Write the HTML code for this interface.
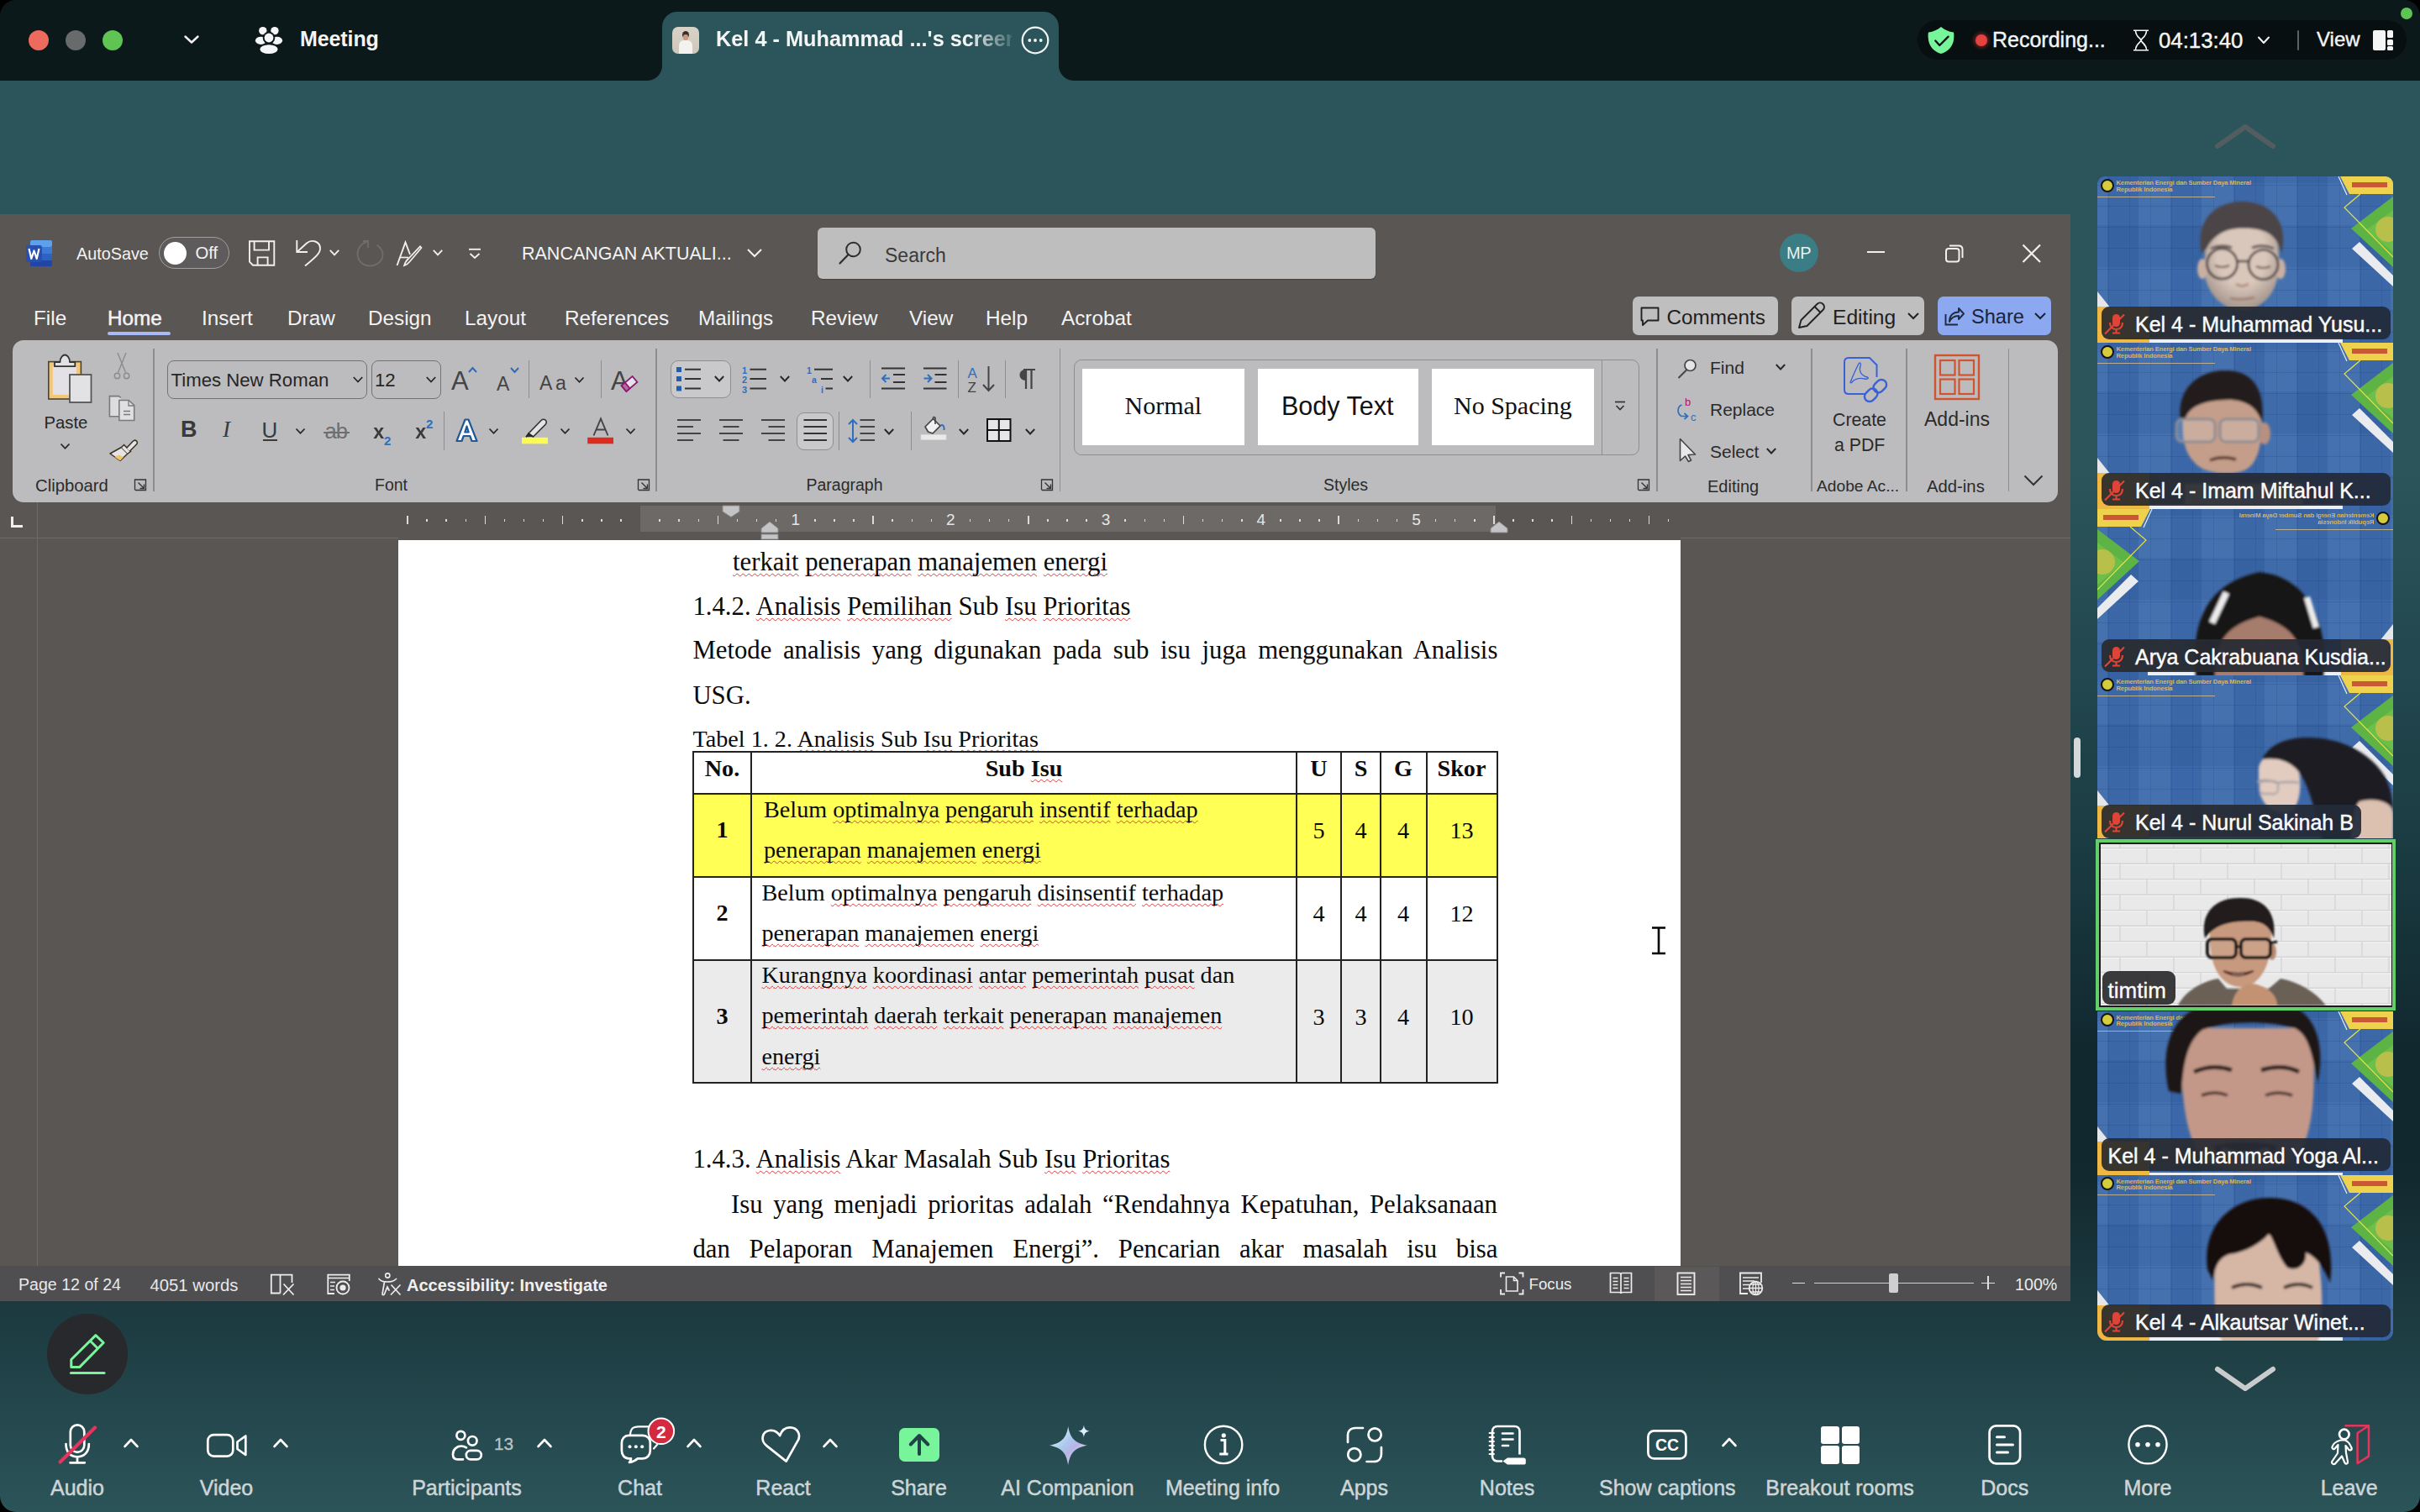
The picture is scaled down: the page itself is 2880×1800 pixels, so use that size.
<!DOCTYPE html>
<html><head><meta charset="utf-8">
<style>
*{margin:0;padding:0;box-sizing:border-box}
html,body{width:2880px;height:1800px;overflow:hidden;background:#000;font-family:"Liberation Sans",sans-serif}
.a{position:absolute}
.t{line-height:1;white-space:nowrap}
.sr{font-family:"Liberation Serif",serif}
#app{position:absolute;left:0;top:0;width:2880px;height:1800px;border-radius:19px;overflow:hidden;
background:linear-gradient(180deg,#0c191a 0px,#0c191a 90px,#2b555b 90px,#2b555b 560px,#1b3c43 1000px,#11272e 1260px,#12292f 1400px,#2b5459 1800px)}
#topbar{left:0;top:0;width:2880px;height:96px;background:#0c191a;border-radius:19px 19px 0 0}
#tab{left:788px;top:14px;width:472px;height:82px;background:#2b555b;border-radius:18px 18px 0 0}
#tab:before,#tab:after{content:"";position:absolute;bottom:0;width:18px;height:18px}
#tab:before{left:-18px;background:radial-gradient(circle at 0 0,#0c191a 17.5px,#2b555b 18.5px)}
#tab:after{right:-18px;background:radial-gradient(circle at 100% 0,#0c191a 17.5px,#2b555b 18.5px)}
#word{left:0;top:255px;width:2464px;height:1294px;background:#5a5653}
#ribbon{left:15px;top:405px;width:2434px;height:193px;background:#bcbcbe;border-radius:13px}
#page{left:474px;top:643px;width:1526px;height:864px;background:#fff;overflow:hidden}
#status{left:0;top:1507px;width:2464px;height:42px;background:#4f4f51}
.wt{color:#f3f3f3}
.rl{color:#2b2b2b}
</style></head><body>
<div id="app">
  <div id="topbar" class="a"></div>
  <div id="tab" class="a"></div>
  <!-- traffic lights -->
  <div class="a" style="left:34px;top:36px;width:24px;height:24px;border-radius:50%;background:#ec6a5e"></div>
  <div class="a" style="left:78px;top:36px;width:24px;height:24px;border-radius:50%;background:#676b6c"></div>
  <div class="a" style="left:122px;top:36px;width:24px;height:24px;border-radius:50%;background:#5fc454"></div>
  <svg class="a" style="left:218px;top:40px" width="20" height="14" viewBox="0 0 20 14"><path d="M2.5 3.5 L10 10.5 L17.5 3.5" fill="none" stroke="#f2f2f2" stroke-width="2.4" stroke-linecap="round" stroke-linejoin="round"/></svg>
  <svg class="a" style="left:300px;top:30px" width="40" height="36" viewBox="300 30 40 36">
    <circle cx="312.8" cy="36.6" r="4.7" fill="#f5f6f7"/><circle cx="326.9" cy="36.6" r="4.7" fill="#f5f6f7"/>
    <ellipse cx="310.5" cy="48.3" rx="6.6" ry="4.6" fill="#f5f6f7"/><ellipse cx="329.5" cy="48.3" rx="6.6" ry="4.6" fill="#f5f6f7"/>
    <circle cx="320" cy="45" r="7.3" fill="#0c191a"/><circle cx="320" cy="45" r="5.4" fill="#f5f6f7"/>
    <ellipse cx="320" cy="58.8" rx="12.3" ry="6.8" fill="#0c191a"/><ellipse cx="320" cy="58.6" rx="10.6" ry="5.4" fill="#f5f6f7"/>
  </svg>
  <div class="a t" style="left:357px;top:34px;font-size:25px;font-weight:bold;color:#f4f5f5;letter-spacing:-0.1px">Meeting</div>
  <!-- tab content -->
  <div class="a" style="left:800px;top:32px;width:32px;height:32px;border-radius:7px;background:linear-gradient(180deg,#d8d2c8,#cfc7bb);overflow:hidden">
    <div class="a" style="left:12px;top:5px;width:8px;height:9px;border-radius:50%;background:#3a2e28"></div>
    <div class="a" style="left:13px;top:9px;width:6px;height:7px;border-radius:45%;background:#c89a80"></div>
    <div class="a" style="left:8px;top:16px;width:16px;height:16px;border-radius:6px 6px 0 0;background:#f4f2ee"></div>
  </div>
  <div class="a t" style="left:852px;top:34px;font-size:25.3px;font-weight:bold;color:#f4f5f5;white-space:nowrap;width:352px;overflow:hidden;-webkit-mask-image:linear-gradient(90deg,#000 300px,rgba(0,0,0,0.15) 352px)">Kel 4 - Muhammad ...'s screen</div>
  <svg class="a" style="left:1214px;top:30px" width="36" height="36" viewBox="0 0 36 36"><circle cx="18" cy="18" r="15.3" fill="none" stroke="#f4f5f5" stroke-width="2.2"/><circle cx="11.3" cy="18" r="1.9" fill="#f4f5f5"/><circle cx="18" cy="18" r="1.9" fill="#f4f5f5"/><circle cx="24.7" cy="18" r="1.9" fill="#f4f5f5"/></svg>
  <!-- right pill -->
  <div class="a" style="left:2282px;top:24px;width:582px;height:47px;border-radius:24px;background:#070f10"></div>
  <svg class="a" style="left:2294px;top:31px" width="33" height="35" viewBox="2294 31 33 35">
    <path d="M2310 32 C2314.5 35.6 2319 37.6 2325 38.6 C2325.6 40 2325.4 44 2325.2 46 C2324.4 55.5 2318 61.5 2310 64 C2302 61.5 2295.6 55.5 2294.8 46 C2294.6 44 2294.4 40 2295 38.6 C2301 37.6 2305.5 35.6 2310 32 Z" fill="#76f59b"/>
    <path d="M2303.3 48.5 L2308.3 54 L2318.6 43.6" fill="none" stroke="#0b1414" stroke-width="2.3" stroke-linecap="round" stroke-linejoin="round"/>
  </svg>
  <div class="a" style="left:2351px;top:41px;width:14px;height:14px;border-radius:50%;background:#e6423f;box-shadow:0 0 4px 2px rgba(230,60,60,0.45)"></div>
  <div class="a t" style="left:2371px;top:35px;font-size:25px;color:#f4f5f5;-webkit-text-stroke:0.4px #f4f5f5">Recording...</div>
  <svg class="a" style="left:2537px;top:34px" width="22" height="28" viewBox="2537 34 22 28">
    <path d="M2539 36.2 H2557 M2539 59.8 H2557 M2541.5 36.2 C2541.5 44 2547.5 45 2548 48 C2547.5 51 2541.5 52 2541.5 59.8 M2554.5 36.2 C2554.5 44 2548.5 45 2548 48 C2548.5 51 2554.5 52 2554.5 59.8" fill="none" stroke="#f4f5f5" stroke-width="1.6"/>
    <path d="M2549 50.5 C2551 51.5 2552 53 2552.3 54.5" fill="none" stroke="#f4f5f5" stroke-width="1.3"/>
  </svg>
  <div class="a t" style="left:2569px;top:36px;font-size:25.8px;color:#f4f5f5;-webkit-text-stroke:0.4px #f4f5f5">04:13:40</div>
  <svg class="a" style="left:2686px;top:42px" width="16" height="12" viewBox="0 0 16 12"><path d="M2 2.5 L8 9 L14 2.5" fill="none" stroke="#f4f5f5" stroke-width="2" stroke-linecap="round" stroke-linejoin="round"/></svg>
  <div class="a" style="left:2734px;top:36px;width:2px;height:24px;background:#5b6262;border-radius:1px"></div>
  <div class="a t" style="left:2757px;top:34.5px;font-size:24px;color:#f4f5f5;-webkit-text-stroke:0.4px #f4f5f5">View</div>
  <div class="a" style="left:2824px;top:36px;width:15px;height:24px;border-radius:2px;background:#f4f5f5"></div>
  <div class="a" style="left:2841px;top:36px;width:7px;height:9px;border-radius:1.5px;background:#f4f5f5"></div>
  <div class="a" style="left:2841px;top:46.5px;width:7px;height:7px;border-radius:1.5px;background:#f4f5f5"></div>
  <div class="a" style="left:2841px;top:55px;width:7px;height:5px;border-radius:1.5px;background:#f4f5f5"></div>
  <div class="a" style="left:2857px;top:9px;width:14px;height:14px;border-radius:50%;background:#5ec454"></div>
  <div id="word" class="a"></div>
  <!-- word icon -->
  <svg class="a" style="left:30px;top:285px" width="34" height="33" viewBox="0 0 34 33">
    <rect x="6" y="1" width="26" height="31" rx="2" fill="#2b5fc2"/>
    <rect x="6" y="1" width="26" height="8" rx="2" fill="#5ea0ea"/>
    <rect x="6" y="9" width="26" height="8" fill="#3d7ad8"/>
    <rect x="6" y="17" width="26" height="8" fill="#2e62c0"/>
    <rect x="6" y="25" width="26" height="7" rx="1" fill="#1f45a6"/>
    <rect x="1" y="7" width="19" height="20" rx="2.5" fill="#2850b0"/>
    <path d="M4.5 11 L7.3 23 L10.5 13.5 L13.7 23 L16.5 11" fill="none" stroke="#fff" stroke-width="2.2" stroke-linejoin="round"/>
  </svg>
  <div class="a t wt" style="left:91px;top:292.5px;font-size:19.8px">AutoSave</div>
  <div class="a" style="left:189px;top:282px;width:84px;height:38px;border-radius:19px;border:1.6px solid #a39f9d;background:#5e5b5c"></div>
  <div class="a" style="left:195px;top:287.5px;width:27px;height:27px;border-radius:50%;background:#fff"></div>
  <div class="a t wt" style="left:232.5px;top:290.5px;font-size:20.3px">Off</div>
  <!-- save -->
  <svg class="a" style="left:294px;top:284px" width="36" height="36" viewBox="294 284 36 36">
    <path d="M297 287.3 H326.3 V315.7 H301 L297 311.7 Z" fill="none" stroke="#f0f0f0" stroke-width="1.9"/>
    <path d="M302.6 287.3 V297.6 H320 V287.3" fill="none" stroke="#f0f0f0" stroke-width="1.9"/>
    <path d="M306.6 315.7 V306.4 H318.6 V315.7" fill="none" stroke="#f0f0f0" stroke-width="1.9"/>
  </svg>
  <!-- undo -->
  <svg class="a" style="left:350px;top:283px" width="36" height="36" viewBox="350 283 36 36">
    <path d="M353.3 286 V300 H366" fill="none" stroke="#f0f0f0" stroke-width="1.9"/>
    <path d="M354 299.5 L365 289.5 C371 284.5 381 287 381 296 C381 301 377 305 363 316.5" fill="none" stroke="#f0f0f0" stroke-width="1.9"/>
  </svg>
  <svg class="a" style="left:391px;top:296px" width="14" height="10" viewBox="0 0 14 10"><path d="M1.8 1.8 L7 7.3 L12.2 1.8" fill="none" stroke="#f0f0f0" stroke-width="1.9"/></svg>
  <!-- redo gray -->
  <svg class="a" style="left:422px;top:284px" width="36" height="36" viewBox="422 284 36 36">
    <path d="M448.5 291.5 C453 295 455.5 299 455.5 303 C455.5 310.5 449 316.5 440.5 316.5 C432 316.5 425.5 310.5 425.5 302 C425.5 295.5 430.5 289.5 437 287.5" fill="none" stroke="#706c6a" stroke-width="1.9"/>
    <path d="M432 287 H438 V295" fill="none" stroke="#706c6a" stroke-width="1.9"/>
  </svg>
  <!-- editor -->
  <svg class="a" style="left:470px;top:286px" width="36" height="34" viewBox="470 286 36 34">
    <path d="M472.5 316 L482.5 288.5 L488 303" fill="none" stroke="#f0f0f0" stroke-width="1.9"/>
    <path d="M476 306.5 H486" fill="none" stroke="#f0f0f0" stroke-width="1.7"/>
    <path d="M501.5 295 L488 311 C486.5 313 485 315 481 316.2 C482 313 483.5 310 486 308 L500 293.3 Z" fill="none" stroke="#f0f0f0" stroke-width="1.7"/>
  </svg>
  <svg class="a" style="left:514px;top:296px" width="14" height="10" viewBox="0 0 14 10"><path d="M1.8 1.8 L7 7.3 L12.2 1.8" fill="none" stroke="#f0f0f0" stroke-width="1.9"/></svg>
  <svg class="a" style="left:556px;top:294px" width="18" height="16" viewBox="0 0 18 16"><path d="M2 2.8 H16" stroke="#f0f0f0" stroke-width="1.9"/><path d="M3.5 8 L9 13 L14.5 8" fill="none" stroke="#f0f0f0" stroke-width="1.9"/></svg>
  <div class="a t wt" style="left:621px;top:292.3px;font-size:21.5px">RANCANGAN AKTUALI...</div>
  <svg class="a" style="left:888px;top:294px" width="20" height="14" viewBox="0 0 20 14"><path d="M2 3 L10 11 L18 3" fill="none" stroke="#f0f0f0" stroke-width="2"/></svg>
  <!-- search -->
  <div class="a" style="left:973px;top:271px;width:664px;height:61px;border-radius:6px;background:#bfbebf;box-shadow:0 1px 1px rgba(0,0,0,0.25)"></div>
  <svg class="a" style="left:997px;top:286px" width="30" height="30" viewBox="0 0 30 30"><circle cx="18.5" cy="11" r="8.3" fill="none" stroke="#2e2e2e" stroke-width="2"/><path d="M12.6 17 L2.5 27.5" stroke="#2e2e2e" stroke-width="2.2" stroke-linecap="round"/></svg>
  <div class="a t" style="left:1053px;top:292.5px;font-size:23px;color:#3a3a3a">Search</div>
  <!-- MP -->
  <div class="a" style="left:2117.5px;top:278px;width:46px;height:46px;border-radius:50%;background:#3a7d85"></div>
  <div class="a t" style="left:2117.5px;top:291px;width:46px;text-align:center;font-size:20px;color:#e9f0f0;letter-spacing:-0.5px">MP</div>
  <div class="a" style="left:2222px;top:299px;width:21px;height:2px;background:#f0f0f0"></div>
  <svg class="a" style="left:2312px;top:289px" width="28" height="26" viewBox="2312 289 28 26">
    <rect x="2316" y="296" width="15.5" height="15.5" rx="3" fill="none" stroke="#f0f0f0" stroke-width="2"/>
    <path d="M2320 292.5 H2331 C2334 292.5 2335.5 294 2335.5 297 V307" fill="none" stroke="#f0f0f0" stroke-width="2"/>
  </svg>
  <svg class="a" style="left:2404px;top:288px" width="28" height="28" viewBox="0 0 28 28"><path d="M3.5 3.5 L24 24 M24 3.5 L3.5 24" stroke="#f0f0f0" stroke-width="2.2"/></svg>
  <!-- tabs -->
  <div class="a t wt" style="left:40px;top:366.8px;font-size:24.3px">File</div>
  <div class="a t wt" style="left:128px;top:366.8px;font-size:24.3px;-webkit-text-stroke:0.5px #f3f3f3">Home</div>
  <div class="a" style="left:128px;top:395px;width:75px;height:4px;border-radius:2px;background:#a9b9f5"></div>
  <div class="a t wt" style="left:240px;top:366.8px;font-size:24.3px">Insert</div>
  <div class="a t wt" style="left:342px;top:366.8px;font-size:24.3px">Draw</div>
  <div class="a t wt" style="left:438px;top:366.8px;font-size:24.3px">Design</div>
  <div class="a t wt" style="left:553px;top:366.8px;font-size:24.3px">Layout</div>
  <div class="a t wt" style="left:672px;top:366.8px;font-size:24.3px">References</div>
  <div class="a t wt" style="left:831px;top:366.8px;font-size:24.3px">Mailings</div>
  <div class="a t wt" style="left:965px;top:366.8px;font-size:24.3px">Review</div>
  <div class="a t wt" style="left:1082px;top:366.8px;font-size:24.3px">View</div>
  <div class="a t wt" style="left:1173px;top:366.8px;font-size:24.3px">Help</div>
  <div class="a t wt" style="left:1263px;top:366.8px;font-size:24.3px">Acrobat</div>
  <!-- buttons -->
  <div class="a" style="left:1943px;top:353px;width:173px;height:46px;border-radius:7px;background:#c0bfc0"></div>
  <svg class="a" style="left:1951px;top:364px" width="26" height="26" viewBox="1951 364 26 26">
    <path d="M1953.5 366.5 H1973.5 V381.5 H1961 L1955 387 V381.5 H1953.5 Z" fill="none" stroke="#222" stroke-width="1.9" stroke-linejoin="round"/>
  </svg>
  <div class="a t" style="left:1983.5px;top:365.5px;font-size:24.3px;color:#1e1e1e">Comments</div>
  <div class="a" style="left:2132px;top:353px;width:158px;height:46px;border-radius:7px;background:#c0bfc0"></div>
  <svg class="a" style="left:2138px;top:359px" width="36" height="34" viewBox="2138 359 36 34">
    <path d="M2141 390 L2143.5 381 L2162.5 362 C2164.5 360 2167.5 360 2169.5 362 C2171.5 364 2171.5 367 2169.5 369 L2150.5 388 Z" fill="none" stroke="#222" stroke-width="1.9" stroke-linejoin="round"/>
    <path d="M2159.5 365 L2166.5 372" stroke="#222" stroke-width="1.9"/>
  </svg>
  <div class="a t" style="left:2181px;top:365.5px;font-size:24.6px;color:#1e1e1e">Editing</div>
  <svg class="a" style="left:2269px;top:371px" width="16" height="11" viewBox="0 0 16 11"><path d="M2 2 L8 8 L14 2" fill="none" stroke="#222" stroke-width="2"/></svg>
  <div class="a" style="left:2306px;top:353px;width:135px;height:46px;border-radius:7px;background:#8ba8f0"></div>
  <svg class="a" style="left:2312px;top:363px" width="28" height="28" viewBox="2312 363 28 28">
    <path d="M2315.5 374 V386.5 H2330" fill="none" stroke="#1e2a40" stroke-width="1.9"/>
    <path d="M2320 383 C2320 375 2325 371.5 2331 371.5 V367 L2337 373.5 L2331 380 V376 C2326 376 2322 378.5 2320 383 Z" fill="none" stroke="#1e2a40" stroke-width="1.9" stroke-linejoin="round"/>
  </svg>
  <div class="a t" style="left:2346px;top:365.5px;font-size:23.6px;color:#1a2338">Share</div>
  <svg class="a" style="left:2420px;top:371px" width="16" height="11" viewBox="0 0 16 11"><path d="M2 2 L8 8 L14 2" fill="none" stroke="#1a2338" stroke-width="2"/></svg>



  <div id="ribbon" class="a"></div>
  <!-- CLIPBOARD -->
  <svg class="a" style="left:50px;top:415px" width="70" height="70" viewBox="50 415 70 70">
    <rect x="57.8" y="430.6" width="38.6" height="44.4" fill="#f2c77a" stroke="#4f4129" stroke-width="1.6"/>
    <rect x="62.8" y="436" width="28" height="34" fill="#e3e1e5"/>
    <path d="M65 436.2 V431 H71.5 C71.5 424.5 75.5 422.5 77.2 422.5 C79 422.5 83 424.5 83 431 H89.3 V436.2 Z" fill="#e2e1e4" stroke="#333" stroke-width="1.8" stroke-linejoin="round"/>
    <rect x="83" y="446" width="25.5" height="33" fill="#e2e1e3" stroke="#555" stroke-width="1.8"/>
  </svg>
  <div class="a t rl" style="left:52.5px;top:492.5px;font-size:20.3px;color:#262626">Paste</div>
  <svg class="a" style="left:71px;top:527px" width="13" height="9" viewBox="0 0 13 9"><path d="M1.5 1.5 L6.5 6.8 L11.5 1.5" fill="none" stroke="#262626" stroke-width="1.8"/></svg>
  <svg class="a" style="left:132px;top:419px" width="26" height="34" viewBox="132 419 26 34">
    <path d="M140 420 L149.5 443.5 M150 420 L140.5 443.5" stroke="#8c8c8c" stroke-width="1.4"/>
    <circle cx="139.5" cy="447.5" r="3.2" fill="none" stroke="#8c8c8c" stroke-width="1.4"/><circle cx="150.6" cy="447.5" r="3.2" fill="none" stroke="#8c8c8c" stroke-width="1.4"/>
  </svg>
  <svg class="a" style="left:127px;top:469px" width="36" height="35" viewBox="127 469 36 35">
    <path d="M141 495.8 H130.4 V471.6 H141.5 L143.8 473.5" fill="#dcdcde" stroke="#7a7a7a" stroke-width="1.6"/>
    <path d="M141.8 476.5 H153.2 L159.7 482.5 V500.5 H141.8 Z" fill="#e0e0e2" stroke="#7a7a7a" stroke-width="1.6"/>
    <path d="M153 476.5 V483 H159.5" fill="none" stroke="#7a7a7a" stroke-width="1.3"/>
    <path d="M147 489.5 H155 M147 493.5 H155" stroke="#7a7a7a" stroke-width="1.4"/>
  </svg>
  <svg class="a" style="left:128px;top:518px" width="36" height="34" viewBox="128 518 36 34">
    <path d="M131 540 L144.5 532.5 L152 540 L143 548.5 Z" fill="#e5e3e4" stroke="#3a3020" stroke-width="1.5" stroke-linejoin="round"/>
    <path d="M136.5 544 L141.5 541.5 L147 544 L143 548.5 Z" fill="#f3c46a"/>
    <path d="M144.5 532.5 L147.5 529.5 L155.5 537.5 L152 540" fill="#e5e3e4" stroke="#3a3020" stroke-width="1.5"/>
    <path d="M150.5 533.5 L158 525.5 C159.5 524 161.5 524 162.5 525 C163.5 526 163.5 528 162 529.5 L154.5 537" fill="#e5e3e4" stroke="#3a3020" stroke-width="1.5"/>
  </svg>
  <div class="a t rl" style="left:42px;top:568px;font-size:20.3px">Clipboard</div>
  <svg class="a" style="left:159px;top:569px" width="17" height="17" viewBox="0 0 17 17"><path d="M1.5 14.5 V2 H14.5 V14.5 H2" fill="none" stroke="#333" stroke-width="1.3"/><path d="M5.5 5.5 L12.5 12.5 M7.5 12.5 H12.5 V7.5" fill="none" stroke="#333" stroke-width="1.4"/></svg>
  <div class="a" style="left:182px;top:415px;width:1.5px;height:170px;background:#8d8d8f"></div>
  <!-- FONT -->
  <div class="a" style="left:199px;top:428.5px;width:238px;height:46px;border-radius:8px;border:1.4px solid #727273"></div>
  <div class="a t sr0" style="left:203.5px;top:441.8px;font-size:22.2px;color:#262626">Times New Roman</div>
  <svg class="a" style="left:419px;top:447px" width="14" height="10" viewBox="0 0 14 10"><path d="M1.8 2 L7 7.5 L12.2 2" fill="none" stroke="#262626" stroke-width="1.8"/></svg>
  <div class="a" style="left:441.5px;top:428.5px;width:83px;height:46px;border-radius:8px;border:1.4px solid #727273"></div>
  <div class="a t" style="left:446px;top:441.8px;font-size:22.2px;color:#262626">12</div>
  <svg class="a" style="left:506px;top:447px" width="14" height="10" viewBox="0 0 14 10"><path d="M1.8 2 L7 7.5 L12.2 2" fill="none" stroke="#262626" stroke-width="1.8"/></svg>
  <div class="a t" style="left:537px;top:438.3px;font-size:31px;color:#444">A</div>
  <svg class="a" style="left:556px;top:435px" width="13" height="10" viewBox="0 0 13 10"><path d="M2 8 L6.5 3 L11 8" fill="none" stroke="#2d6bbf" stroke-width="2"/></svg>
  <div class="a t" style="left:591px;top:446.3px;font-size:23px;color:#444">A</div>
  <svg class="a" style="left:606px;top:436px" width="13" height="10" viewBox="0 0 13 10"><path d="M2 2 L6.5 7 L11 2" fill="none" stroke="#2d6bbf" stroke-width="2"/></svg>
  <div class="a" style="left:629px;top:428.5px;width:1.3px;height:45.5px;background:#8d8d8f"></div>
  <div class="a t" style="left:642px;top:445.3px;font-size:23px;color:#444">A</div>
  <div class="a t" style="left:661px;top:445.3px;font-size:23px;color:#444">a</div>
  <svg class="a" style="left:683px;top:448px" width="13" height="9" viewBox="0 0 13 9"><path d="M1.5 1.5 L6.5 6.8 L11.5 1.5" fill="none" stroke="#262626" stroke-width="1.8"/></svg>
  <div class="a" style="left:715px;top:428.5px;width:1.3px;height:45.5px;background:#8d8d8f"></div>
  <div class="a t" style="left:727px;top:438.3px;font-size:31px;color:#444">A</div>
  <svg class="a" style="left:738px;top:446px" width="22" height="22" viewBox="0 0 22 22"><g transform="rotate(-40 11 11)"><rect x="2.5" y="6.5" width="17" height="9" fill="#e6e1ea" stroke="#8b1a6e" stroke-width="1.8"/><rect x="2.5" y="6.5" width="5.5" height="9" fill="#b56aa3" stroke="#8b1a6e" stroke-width="1.8"/></g></svg>
  <!-- row2 -->
  <div class="a t" style="left:215px;top:497.5px;font-size:27px;font-weight:bold;color:#3a3a3a">B</div>
  <div class="a t sr" style="left:265px;top:497.5px;font-size:27px;font-style:italic;color:#3a3a3a">I</div>
  <div class="a t" style="left:311.5px;top:498.5px;font-size:26px;color:#3a3a3a">U</div>
  <div class="a" style="left:312.5px;top:522.5px;width:17.5px;height:2px;background:#3a3a3a"></div>
  <svg class="a" style="left:351px;top:509px" width="13" height="9" viewBox="0 0 13 9"><path d="M1.5 1.5 L6.5 6.8 L11.5 1.5" fill="none" stroke="#262626" stroke-width="1.8"/></svg>
  <div class="a t" style="left:386.5px;top:500.5px;font-size:25.5px;color:#6e6e6e;letter-spacing:-1px">ab</div>
  <div class="a" style="left:385px;top:514px;width:30.5px;height:1.8px;background:#6e6e6e"></div>
  <div class="a t" style="left:443.5px;top:502px;font-size:24.5px;color:#3a3a3a;font-weight:bold;transform:scaleX(0.95)">x</div>
  <div class="a t" style="left:457px;top:516.5px;font-size:15px;color:#2f6fc0;font-weight:bold">2</div>
  <div class="a t" style="left:493.5px;top:502px;font-size:24.5px;color:#3a3a3a;font-weight:bold;transform:scaleX(0.95)">x</div>
  <div class="a t" style="left:507px;top:496.5px;font-size:15px;color:#2f6fc0;font-weight:bold">2</div>
  <div class="a" style="left:528px;top:490px;width:1.3px;height:46px;background:#8d8d8f"></div>
  <svg class="a" style="left:540px;top:496px" width="32" height="32" viewBox="540 496 32 32">
    <path d="M543.5 525 L553.5 499.5 H557.5 L567.5 525 H561.5 L559.3 519 H551.7 L549.5 525 Z M553.3 514.5 H557.7 L555.5 507.5 Z" fill="#fff" stroke="#1f5799" stroke-width="2.2" stroke-linejoin="round"/>
  </svg>
  <svg class="a" style="left:581px;top:509px" width="13" height="9" viewBox="0 0 13 9"><path d="M1.5 1.5 L6.5 6.8 L11.5 1.5" fill="none" stroke="#262626" stroke-width="1.8"/></svg>
  <svg class="a" style="left:619px;top:494px" width="36" height="36" viewBox="619 494 36 36">
    <rect x="621" y="520.8" width="31" height="7.5" fill="#fbfb52"/>
    <path d="M629 516 L644 500.5 C645.5 499 648 499 649.3 500.3 C650.6 501.6 650.6 504 649 505.5 L634.5 520 Z" fill="#e4e3e6" stroke="#333" stroke-width="1.6"/>
    <path d="M629 516 L625.5 520 L631 519.5 L634.5 520 Z" fill="#222"/>
    <path d="M626 520.3 L629 516 L634.5 520" fill="#333" stroke="#222" stroke-width="1.5"/>
  </svg>
  <svg class="a" style="left:666px;top:509px" width="13" height="9" viewBox="0 0 13 9"><path d="M1.5 1.5 L6.5 6.8 L11.5 1.5" fill="none" stroke="#262626" stroke-width="1.8"/></svg>
  <svg class="a" style="left:698px;top:495px" width="34" height="35" viewBox="698 495 34 35">
    <path d="M706.5 518.5 L715 498.5 L723.5 518.5 M709.5 511.5 H720.5" fill="none" stroke="#444" stroke-width="1.9"/>
    <rect x="699.2" y="520.8" width="30.8" height="7.5" fill="#dd2c1f"/>
  </svg>
  <svg class="a" style="left:744px;top:509px" width="13" height="9" viewBox="0 0 13 9"><path d="M1.5 1.5 L6.5 6.8 L11.5 1.5" fill="none" stroke="#262626" stroke-width="1.8"/></svg>
  <div class="a t rl" style="left:446px;top:568px;font-size:19.5px">Font</div>
  <svg class="a" style="left:758px;top:569px" width="17" height="17" viewBox="0 0 17 17"><path d="M1.5 14.5 V2 H14.5 V14.5 H2" fill="none" stroke="#333" stroke-width="1.3"/><path d="M5.5 5.5 L12.5 12.5 M7.5 12.5 H12.5 V7.5" fill="none" stroke="#333" stroke-width="1.4"/></svg>
  <div class="a" style="left:780px;top:415px;width:1.5px;height:170px;background:#8d8d8f"></div>
  <!-- PARAGRAPH -->
  <div class="a" style="left:798px;top:429px;width:72px;height:45px;border-radius:9px;background:#c9c8cb;border:1.3px solid #8e8e90"></div>
  <svg class="a" style="left:803px;top:435px" width="34" height="32" viewBox="803 435 34 32">
    <rect x="805" y="437" width="6" height="6" fill="#1f5fae"/><rect x="805" y="448" width="6" height="6" fill="#1f5fae"/><rect x="805" y="459.5" width="6" height="6" fill="#1f5fae"/>
    <path d="M815 439.8 H834 M815 451 H834 M815 462.4 H834" stroke="#333" stroke-width="2"/>
  </svg>
  <svg class="a" style="left:849px;top:446px" width="14" height="10" viewBox="0 0 14 10"><path d="M1.8 2 L7 7.5 L12.2 2" fill="none" stroke="#262626" stroke-width="1.9"/></svg>
  <svg class="a" style="left:880px;top:433px" width="36" height="36" viewBox="880 433 36 36">
    <text x="883" y="444.5" font-family="Liberation Sans" font-size="11" font-weight="bold" fill="#2f6fbf">1</text>
    <text x="883" y="456" font-family="Liberation Sans" font-size="11" font-weight="bold" fill="#2f6fbf">2</text>
    <text x="883" y="467.5" font-family="Liberation Sans" font-size="11" font-weight="bold" fill="#2f6fbf">3</text>
    <path d="M892.5 439.8 H912 M892.5 451 H912 M892.5 462.4 H912" stroke="#333" stroke-width="2"/>
  </svg>
  <svg class="a" style="left:927px;top:446px" width="14" height="10" viewBox="0 0 14 10"><path d="M1.8 2 L7 7.5 L12.2 2" fill="none" stroke="#262626" stroke-width="1.9"/></svg>
  <svg class="a" style="left:958px;top:433px" width="36" height="36" viewBox="958 433 36 36">
    <text x="960" y="444.5" font-family="Liberation Sans" font-size="10.5" font-weight="bold" fill="#2f6fbf">1</text>
    <text x="966" y="456" font-family="Liberation Sans" font-size="10.5" font-weight="bold" fill="#2f6fbf">a</text>
    <text x="977" y="467.5" font-family="Liberation Sans" font-size="10.5" font-weight="bold" fill="#2f6fbf">i</text>
    <path d="M969 439.8 H991 M977 451 H991 M982.5 462.4 H991" stroke="#333" stroke-width="2"/>
  </svg>
  <svg class="a" style="left:1002px;top:446px" width="14" height="10" viewBox="0 0 14 10"><path d="M1.8 2 L7 7.5 L12.2 2" fill="none" stroke="#262626" stroke-width="1.9"/></svg>
  <div class="a" style="left:1034.5px;top:429px;width:1.3px;height:45px;background:#8d8d8f"></div>
  <svg class="a" style="left:1046px;top:434px" width="34" height="32" viewBox="1046 434 34 32">
    <path d="M1049 438.5 H1077 M1063 446 H1077 M1063 455 H1077 M1049 462.5 H1077" stroke="#333" stroke-width="2"/>
    <path d="M1059 450.5 H1050 M1054.5 446 L1050 450.5 L1054.5 455" fill="none" stroke="#2f6fbf" stroke-width="2"/>
  </svg>
  <svg class="a" style="left:1096px;top:434px" width="34" height="32" viewBox="1096 434 34 32">
    <path d="M1099 438.5 H1126.5 M1112.5 446 H1126.5 M1112.5 455 H1126.5 M1099 462.5 H1126.5" stroke="#333" stroke-width="2"/>
    <path d="M1099.5 450.5 H1108.5 M1104 446 L1108.5 450.5 L1104 455" fill="none" stroke="#2f6fbf" stroke-width="2"/>
  </svg>
  <div class="a" style="left:1140px;top:429px;width:1.3px;height:45px;background:#8d8d8f"></div>
  <svg class="a" style="left:1150px;top:433px" width="38" height="36" viewBox="1150 433 38 36">
    <text x="1151.5" y="450" font-family="Liberation Sans" font-size="17" fill="#2f6fbf">A</text>
    <text x="1151.5" y="467" font-family="Liberation Sans" font-size="17" fill="#444">Z</text>
    <path d="M1176.5 436 V465 M1170 458 L1176.5 465 L1183 458" fill="none" stroke="#444" stroke-width="2"/>
  </svg>
  <div class="a" style="left:1196px;top:429px;width:1.3px;height:45px;background:#8d8d8f"></div>
  <svg class="a" style="left:1210px;top:437px" width="26" height="28" viewBox="1210 437 26 28">
    <path d="M1221 440 C1215 440 1213.5 443.5 1213.5 446.5 C1213.5 450 1216 453 1221 453 Z" fill="#444"/>
    <path d="M1221 440 V463 M1227.5 440 V463 M1218 440 H1232" stroke="#444" stroke-width="2.2"/>
  </svg>
  <!-- row 2 -->
  <svg class="a" style="left:804px;top:497px" width="32" height="30" viewBox="804 497 32 30">
    <path d="M806 500 H834 M806 508 H825 M806 516 H834 M806 524 H825" stroke="#444" stroke-width="2"/>
  </svg>
  <svg class="a" style="left:854px;top:497px" width="32" height="30" viewBox="854 497 32 30">
    <path d="M856 500 H884 M860.5 508 H879.5 M856 516 H884 M860.5 524 H879.5" stroke="#444" stroke-width="2"/>
  </svg>
  <svg class="a" style="left:904px;top:497px" width="32" height="30" viewBox="904 497 32 30">
    <path d="M906 500 H934 M914.5 508 H934 M906 516 H934 M914.5 524 H934" stroke="#444" stroke-width="2"/>
  </svg>
  <div class="a" style="left:948px;top:490.5px;width:44px;height:45px;border-radius:9px;background:#c9c8cb;border:1.3px solid #8e8e90"></div>
  <svg class="a" style="left:954px;top:497px" width="32" height="30" viewBox="954 497 32 30">
    <path d="M956.5 500 H984 M956.5 508 H984 M956.5 516 H984 M956.5 524 H984" stroke="#333" stroke-width="2"/>
  </svg>
  <div class="a" style="left:997.5px;top:490px;width:1.3px;height:46px;background:#8d8d8f"></div>
  <svg class="a" style="left:1007px;top:497px" width="36" height="32" viewBox="1007 497 36 32">
    <path d="M1015 500 V526 M1010 505 L1015 500 L1020 505 M1010 521 L1015 526 L1020 521" fill="none" stroke="#2f6fbf" stroke-width="2"/>
    <path d="M1023.5 500 H1041 M1023.5 508 H1041 M1023.5 516 H1041 M1023.5 524 H1041" stroke="#444" stroke-width="2"/>
  </svg>
  <svg class="a" style="left:1051px;top:509px" width="14" height="10" viewBox="0 0 14 10"><path d="M1.8 2 L7 7.5 L12.2 2" fill="none" stroke="#262626" stroke-width="1.9"/></svg>
  <div class="a" style="left:1083.5px;top:490px;width:1.3px;height:46px;background:#8d8d8f"></div>
  <svg class="a" style="left:1094px;top:495px" width="36" height="34" viewBox="1094 495 36 34">
    <path d="M1101 508 L1110.5 498.5 L1119 507 L1110 516 L1104.5 514 Z" fill="#f0f0f0" stroke="#444" stroke-width="1.7" stroke-linejoin="round"/>
    <path d="M1110.5 498.5 C1110 496.5 1112 495.8 1113 497.5 L1113 505" fill="none" stroke="#444" stroke-width="1.6"/>
    <path d="M1119 507 C1121.5 505 1124 506 1123.5 512" fill="none" stroke="#2f6fbf" stroke-width="2"/>
    <rect x="1096" y="517.5" width="30" height="6" fill="#e9e9ea" stroke="#d8d8da" stroke-width="0.8"/>
  </svg>
  <svg class="a" style="left:1140px;top:509px" width="14" height="10" viewBox="0 0 14 10"><path d="M1.8 2 L7 7.5 L12.2 2" fill="none" stroke="#262626" stroke-width="1.9"/></svg>
  <svg class="a" style="left:1172px;top:496px" width="34" height="32" viewBox="1172 496 34 32">
    <rect x="1175" y="499" width="27.5" height="26" fill="#e6e6e8" stroke="#111" stroke-width="2"/>
    <path d="M1188.8 499 V525 M1175 512 H1202.5" stroke="#111" stroke-width="2"/>
  </svg>
  <svg class="a" style="left:1219px;top:509px" width="14" height="10" viewBox="0 0 14 10"><path d="M1.8 2 L7 7.5 L12.2 2" fill="none" stroke="#262626" stroke-width="1.9"/></svg>
  <div class="a t rl" style="left:959.5px;top:568px;font-size:19.5px">Paragraph</div>
  <svg class="a" style="left:1238px;top:569px" width="17" height="17" viewBox="0 0 17 17"><path d="M1.5 14.5 V2 H14.5 V14.5 H2" fill="none" stroke="#333" stroke-width="1.3"/><path d="M5.5 5.5 L12.5 12.5 M7.5 12.5 H12.5 V7.5" fill="none" stroke="#333" stroke-width="1.4"/></svg>
  <div class="a" style="left:1260.5px;top:415px;width:1.5px;height:170px;background:#8d8d8f"></div>
  <!-- STYLES -->
  <div class="a" style="left:1278px;top:428px;width:673px;height:114px;border-radius:9px;border:1.3px solid #8e8e90"></div>
  <div class="a" style="left:1288px;top:439px;width:193px;height:91px;background:#fff"></div>
  <div class="a" style="left:1497px;top:439px;width:191px;height:91px;background:#fff"></div>
  <div class="a" style="left:1704px;top:439px;width:193px;height:91px;background:#fff"></div>
  <div class="a t sr" style="left:1338.5px;top:467.8px;font-size:30px;color:#111">Normal</div>
  <div class="a t" style="left:1525px;top:467.6px;font-size:30.5px;color:#111">Body Text</div>
  <div class="a t sr" style="left:1730px;top:467.8px;font-size:30px;color:#111">No Spacing</div>
  <div class="a" style="left:1906px;top:428px;width:1.3px;height:114px;background:#8e8e90"></div>
  <svg class="a" style="left:1919px;top:476px" width="18" height="16" viewBox="0 0 18 16"><path d="M3 2.5 H15" stroke="#333" stroke-width="1.7"/><path d="M4.5 7 L9 11.5 L13.5 7" fill="none" stroke="#333" stroke-width="1.7"/></svg>
  <div class="a t rl" style="left:1575px;top:568px;font-size:19.5px">Styles</div>
  <svg class="a" style="left:1948px;top:569px" width="17" height="17" viewBox="0 0 17 17"><path d="M1.5 14.5 V2 H14.5 V14.5 H2" fill="none" stroke="#333" stroke-width="1.3"/><path d="M5.5 5.5 L12.5 12.5 M7.5 12.5 H12.5 V7.5" fill="none" stroke="#333" stroke-width="1.4"/></svg>
  <div class="a" style="left:1971px;top:415px;width:1.5px;height:170px;background:#8d8d8f"></div>
  <!-- EDITING -->
  <svg class="a" style="left:1995px;top:419px" width="34" height="34" viewBox="1995 419 34 34">
    <circle cx="2011.5" cy="435" r="6.5" fill="#e5e5e7" stroke="#444" stroke-width="1.7"/>
    <path d="M2007.5 440 L1997.5 450" stroke="#444" stroke-width="1.9"/>
  </svg>
  <div class="a t rl" style="left:2035px;top:427px;font-size:21px">Find</div>
  <svg class="a" style="left:2112px;top:432px" width="14" height="10" viewBox="0 0 14 10"><path d="M1.8 2 L7 7.5 L12.2 2" fill="none" stroke="#262626" stroke-width="1.9"/></svg>
  <svg class="a" style="left:1993px;top:469px" width="32" height="34" viewBox="1993 469 32 34">
    <text x="2005" y="483" font-family="Liberation Sans" font-size="13" fill="#a8186c">b</text>
    <text x="2012" y="501" font-family="Liberation Sans" font-size="13" fill="#2f6fbf">c</text>
    <path d="M2001.5 482 C1996 484 1995.5 492 2001 495.5 L2008 495.5 M2004.5 492 L2008.5 495.5 L2004.5 499" fill="none" stroke="#2f6fbf" stroke-width="1.7"/>
  </svg>
  <div class="a t rl" style="left:2035px;top:476.5px;font-size:21px">Replace</div>
  <svg class="a" style="left:1997px;top:520px" width="26" height="32" viewBox="1997 520 26 32">
    <path d="M1999.5 522.5 V548.5 L2005.5 543 L2009.5 549.5 L2012.5 548 L2009 541.5 L2017.5 541 Z" fill="#e8e8ea" stroke="#444" stroke-width="1.6" stroke-linejoin="round"/>
  </svg>
  <div class="a t rl" style="left:2035px;top:526.5px;font-size:21px">Select</div>
  <svg class="a" style="left:2101px;top:532px" width="14" height="10" viewBox="0 0 14 10"><path d="M1.8 2 L7 7.5 L12.2 2" fill="none" stroke="#262626" stroke-width="1.9"/></svg>
  <div class="a t rl" style="left:2032px;top:568.5px;font-size:20px">Editing</div>
  <div class="a" style="left:2155px;top:415px;width:1.5px;height:170px;background:#8d8d8f"></div>
  <!-- ADOBE -->
  <svg class="a" style="left:2190px;top:422px" width="60" height="62" viewBox="2190 422 60 62">
    <path d="M2220 469 H2200 C2197 469 2195 467 2195 464 V431 C2195 428 2197 426 2200 426 H2225 L2233.5 434.5 V449" fill="none" stroke="#3a62d6" stroke-width="2"/>
    <path d="M2203 453 C2206 445 2210 437 2212 433 C2213 431 2215.5 432 2214 436 C2212 442 2215 447 2222 449 C2225 450 2222 452 2219 451 C2212 449 2206 452 2204 455 C2202 457 2201.5 455 2203 453 Z" fill="none" stroke="#3a62d6" stroke-width="1.4"/>
    <g transform="rotate(-45 2232 465)">
      <rect x="2216" y="459" width="17" height="12" rx="6" fill="none" stroke="#3a62d6" stroke-width="2.4"/>
      <rect x="2231" y="459" width="17" height="12" rx="6" fill="none" stroke="#3a62d6" stroke-width="2.4"/>
    </g>
  </svg>
  <div class="a t rl" style="left:2181px;top:489.5px;font-size:21.3px">Create</div>
  <div class="a t rl" style="left:2183px;top:520.2px;font-size:21.3px">a PDF</div>
  <div class="a t rl" style="left:2162px;top:568.5px;font-size:19.2px">Adobe Ac...</div>
  <div class="a" style="left:2268px;top:415px;width:1.5px;height:170px;background:#8d8d8f"></div>
  <!-- ADDINS -->
  <svg class="a" style="left:2300px;top:420px" width="58" height="58" viewBox="2300 420 58 58">
    <rect x="2303" y="423" width="52" height="52" fill="none" stroke="#d2542e" stroke-width="2.4"/>
    <rect x="2309" y="429" width="17.5" height="17.5" fill="none" stroke="#d2542e" stroke-width="2.2"/>
    <rect x="2331.5" y="429" width="17.5" height="17.5" fill="none" stroke="#d2542e" stroke-width="2.2"/>
    <rect x="2309" y="451.5" width="17.5" height="17.5" fill="none" stroke="#d2542e" stroke-width="2.2"/>
    <rect x="2331.5" y="451.5" width="17.5" height="17.5" fill="none" stroke="#d2542e" stroke-width="2.2"/>
  </svg>
  <div class="a t rl" style="left:2290px;top:487.5px;font-size:23px">Add-ins</div>
  <div class="a t rl" style="left:2293px;top:568.5px;font-size:20.3px">Add-ins</div>
  <div class="a" style="left:2389.5px;top:415px;width:1.5px;height:170px;background:#8d8d8f"></div>
  <svg class="a" style="left:2407px;top:564px" width="26" height="16" viewBox="0 0 26 16"><path d="M2.5 2.5 L13 13 L23.5 2.5" fill="none" stroke="#333" stroke-width="2"/></svg>
  <div id="page" class="a"></div>
  <div class="a" style="left:44px;top:598px;width:1.3px;height:909px;background:#6e6a68"></div>
  <div class="a" style="left:0px;top:640px;width:474px;height:1.3px;background:#6e6a68"></div>
  <div class="a" style="left:2000px;top:640px;width:464px;height:1.3px;background:#6e6a68"></div>
  <svg class="a" style="left:12px;top:613px" width="18" height="18" viewBox="0 0 18 18"><path d="M2.5 2 V13.5 H15" fill="none" stroke="#f0f0f0" stroke-width="3"/></svg>
  <div class="a" style="left:762px;top:602px;width:1018px;height:30.5px;background:#6c6967"></div>
  <div class="a" style="left:484.2px;top:613.5px;width:1.5px;height:10.5px;background:#dcdcdc"></div>
  <div class="a" style="left:507.3px;top:617.5px;width:1.5px;height:3px;background:#dcdcdc"></div>
  <div class="a" style="left:530.4px;top:617.5px;width:1.5px;height:3px;background:#dcdcdc"></div>
  <div class="a" style="left:553.5px;top:617.5px;width:1.5px;height:3px;background:#dcdcdc"></div>
  <div class="a" style="left:576.5px;top:613.5px;width:1.5px;height:10.5px;background:#dcdcdc"></div>
  <div class="a" style="left:599.6px;top:617.5px;width:1.5px;height:3px;background:#dcdcdc"></div>
  <div class="a" style="left:622.7px;top:617.5px;width:1.5px;height:3px;background:#dcdcdc"></div>
  <div class="a" style="left:645.8px;top:617.5px;width:1.5px;height:3px;background:#dcdcdc"></div>
  <div class="a" style="left:668.9px;top:613.5px;width:1.5px;height:10.5px;background:#dcdcdc"></div>
  <div class="a" style="left:692.0px;top:617.5px;width:1.5px;height:3px;background:#dcdcdc"></div>
  <div class="a" style="left:715.1px;top:617.5px;width:1.5px;height:3px;background:#dcdcdc"></div>
  <div class="a" style="left:738.2px;top:617.5px;width:1.5px;height:3px;background:#dcdcdc"></div>
  <div class="a" style="left:784.3px;top:617.5px;width:1.5px;height:3px;background:#dcdcdc"></div>
  <div class="a" style="left:807.4px;top:617.5px;width:1.5px;height:3px;background:#dcdcdc"></div>
  <div class="a" style="left:830.5px;top:617.5px;width:1.5px;height:3px;background:#dcdcdc"></div>
  <div class="a" style="left:853.6px;top:613.5px;width:1.5px;height:10.5px;background:#dcdcdc"></div>
  <div class="a" style="left:876.7px;top:617.5px;width:1.5px;height:3px;background:#dcdcdc"></div>
  <div class="a" style="left:899.8px;top:617.5px;width:1.5px;height:3px;background:#dcdcdc"></div>
  <div class="a" style="left:922.9px;top:617.5px;width:1.5px;height:3px;background:#dcdcdc"></div>
  <div class="a t" style="left:940.7px;top:609px;width:12px;text-align:center;font-size:19px;color:#e6e6e6">1</div>
  <div class="a" style="left:969.0px;top:617.5px;width:1.5px;height:3px;background:#dcdcdc"></div>
  <div class="a" style="left:992.1px;top:617.5px;width:1.5px;height:3px;background:#dcdcdc"></div>
  <div class="a" style="left:1015.2px;top:617.5px;width:1.5px;height:3px;background:#dcdcdc"></div>
  <div class="a" style="left:1038.3px;top:613.5px;width:1.5px;height:10.5px;background:#dcdcdc"></div>
  <div class="a" style="left:1061.4px;top:617.5px;width:1.5px;height:3px;background:#dcdcdc"></div>
  <div class="a" style="left:1084.5px;top:617.5px;width:1.5px;height:3px;background:#dcdcdc"></div>
  <div class="a" style="left:1107.6px;top:617.5px;width:1.5px;height:3px;background:#dcdcdc"></div>
  <div class="a t" style="left:1125.4px;top:609px;width:12px;text-align:center;font-size:19px;color:#e6e6e6">2</div>
  <div class="a" style="left:1153.7px;top:617.5px;width:1.5px;height:3px;background:#dcdcdc"></div>
  <div class="a" style="left:1176.8px;top:617.5px;width:1.5px;height:3px;background:#dcdcdc"></div>
  <div class="a" style="left:1199.9px;top:617.5px;width:1.5px;height:3px;background:#dcdcdc"></div>
  <div class="a" style="left:1223.0px;top:613.5px;width:1.5px;height:10.5px;background:#dcdcdc"></div>
  <div class="a" style="left:1246.1px;top:617.5px;width:1.5px;height:3px;background:#dcdcdc"></div>
  <div class="a" style="left:1269.2px;top:617.5px;width:1.5px;height:3px;background:#dcdcdc"></div>
  <div class="a" style="left:1292.3px;top:617.5px;width:1.5px;height:3px;background:#dcdcdc"></div>
  <div class="a t" style="left:1310.1px;top:609px;width:12px;text-align:center;font-size:19px;color:#e6e6e6">3</div>
  <div class="a" style="left:1338.4px;top:617.5px;width:1.5px;height:3px;background:#dcdcdc"></div>
  <div class="a" style="left:1361.5px;top:617.5px;width:1.5px;height:3px;background:#dcdcdc"></div>
  <div class="a" style="left:1384.6px;top:617.5px;width:1.5px;height:3px;background:#dcdcdc"></div>
  <div class="a" style="left:1407.7px;top:613.5px;width:1.5px;height:10.5px;background:#dcdcdc"></div>
  <div class="a" style="left:1430.8px;top:617.5px;width:1.5px;height:3px;background:#dcdcdc"></div>
  <div class="a" style="left:1453.9px;top:617.5px;width:1.5px;height:3px;background:#dcdcdc"></div>
  <div class="a" style="left:1477.0px;top:617.5px;width:1.5px;height:3px;background:#dcdcdc"></div>
  <div class="a t" style="left:1494.8px;top:609px;width:12px;text-align:center;font-size:19px;color:#e6e6e6">4</div>
  <div class="a" style="left:1523.1px;top:617.5px;width:1.5px;height:3px;background:#dcdcdc"></div>
  <div class="a" style="left:1546.2px;top:617.5px;width:1.5px;height:3px;background:#dcdcdc"></div>
  <div class="a" style="left:1569.3px;top:617.5px;width:1.5px;height:3px;background:#dcdcdc"></div>
  <div class="a" style="left:1592.4px;top:613.5px;width:1.5px;height:10.5px;background:#dcdcdc"></div>
  <div class="a" style="left:1615.5px;top:617.5px;width:1.5px;height:3px;background:#dcdcdc"></div>
  <div class="a" style="left:1638.6px;top:617.5px;width:1.5px;height:3px;background:#dcdcdc"></div>
  <div class="a" style="left:1661.7px;top:617.5px;width:1.5px;height:3px;background:#dcdcdc"></div>
  <div class="a t" style="left:1679.5px;top:609px;width:12px;text-align:center;font-size:19px;color:#e6e6e6">5</div>
  <div class="a" style="left:1707.8px;top:617.5px;width:1.5px;height:3px;background:#dcdcdc"></div>
  <div class="a" style="left:1730.9px;top:617.5px;width:1.5px;height:3px;background:#dcdcdc"></div>
  <div class="a" style="left:1754.0px;top:617.5px;width:1.5px;height:3px;background:#dcdcdc"></div>
  <div class="a" style="left:1777.1px;top:613.5px;width:1.5px;height:10.5px;background:#dcdcdc"></div>
  <div class="a" style="left:1800.2px;top:617.5px;width:1.5px;height:3px;background:#dcdcdc"></div>
  <div class="a" style="left:1823.3px;top:617.5px;width:1.5px;height:3px;background:#dcdcdc"></div>
  <div class="a" style="left:1846.4px;top:617.5px;width:1.5px;height:3px;background:#dcdcdc"></div>
  <div class="a" style="left:1869.5px;top:613.5px;width:1.5px;height:10.5px;background:#dcdcdc"></div>
  <div class="a" style="left:1892.5px;top:617.5px;width:1.5px;height:3px;background:#dcdcdc"></div>
  <div class="a" style="left:1915.6px;top:617.5px;width:1.5px;height:3px;background:#dcdcdc"></div>
  <div class="a" style="left:1938.7px;top:617.5px;width:1.5px;height:3px;background:#dcdcdc"></div>
  <div class="a" style="left:1961.8px;top:613.5px;width:1.5px;height:10.5px;background:#dcdcdc"></div>
  <div class="a" style="left:1984.9px;top:617.5px;width:1.5px;height:3px;background:#dcdcdc"></div>
  <svg class="a" style="left:858px;top:600px" width="24" height="17" viewBox="0 0 24 17"><path d="M2 2 H22 V9 L12 15.5 L2 9 Z" fill="#c4c4c6" stroke="#8a8a8a" stroke-width="1"/></svg>
  <svg class="a" style="left:904px;top:619px" width="24" height="24" viewBox="0 0 24 24"><path d="M2 10 L12 2 L22 10 V15 H2 Z" fill="#c4c4c6" stroke="#8a8a8a" stroke-width="1"/><rect x="2" y="17" width="20" height="6" fill="#c4c4c6" stroke="#8a8a8a" stroke-width="1"/></svg>
  <svg class="a" style="left:1772px;top:619px" width="24" height="16" viewBox="0 0 24 16"><path d="M2 10 L12 2 L22 10 V15 H2 Z" fill="#c4c4c6" stroke="#8a8a8a" stroke-width="1"/></svg>
  <div id="page" class="a"></div>
  <style>
  .d{position:absolute;font-family:"Liberation Serif",serif;line-height:1;white-space:nowrap;color:#0a0a0a}
  .w{text-decoration:underline wavy #e23a3a;text-decoration-thickness:1.4px;text-underline-offset:2.5px;text-decoration-skip-ink:none}
  .j{text-align:justify;text-align-last:justify;white-space:normal}
  .tb{position:absolute;background:#222}
  .c{text-align:center}
  </style>
  <div class="d" style="left:872px;top:654.0px;font-size:30.75px"><span class="w">terkait</span> <span class="w">penerapan</span> <span class="w">manajemen</span> <span class="w">energi</span></div>
  <div class="d" style="left:824.4px;top:706.6px;font-size:30.75px">1.4.2. <span class="w">Analisis</span> <span class="w">Pemilihan</span> Sub <span class="w">Isu</span> <span class="w">Prioritas</span></div>
  <div class="d j" style="left:824.4px;top:759.3px;width:958px;font-size:30.75px">Metode analisis yang digunakan pada sub isu juga menggunakan Analisis</div>
  <div class="d" style="left:824.4px;top:812.8px;font-size:30.75px">USG.</div>
  <div class="d" style="left:824.4px;top:865.6px;font-size:28.2px">Tabel 1. 2. <span class="w">Analisis</span> Sub <span class="w">Isu</span> <span class="w">Prioritas</span></div>
  <!-- table backgrounds -->
  <div class="a" style="left:825px;top:945px;width:957px;height:98.5px;background:#ffff55"></div>
  <div class="a" style="left:825px;top:1143px;width:957px;height:146px;background:#ebebeb"></div>
  <!-- table lines -->
  <div class="tb" style="left:824px;top:894px;width:959px;height:2px"></div>
  <div class="tb" style="left:824px;top:943.5px;width:959px;height:2px"></div>
  <div class="tb" style="left:824px;top:1042.6px;width:959px;height:2px"></div>
  <div class="tb" style="left:824px;top:1141.7px;width:959px;height:2px"></div>
  <div class="tb" style="left:824px;top:1288.3px;width:959px;height:2px"></div>
  <div class="tb" style="left:823.8px;top:894px;width:2px;height:396px"></div>
  <div class="tb" style="left:892.7px;top:894px;width:2px;height:396px"></div>
  <div class="tb" style="left:1542.3px;top:894px;width:2px;height:396px"></div>
  <div class="tb" style="left:1594.9px;top:894px;width:2px;height:396px"></div>
  <div class="tb" style="left:1642.3px;top:894px;width:2px;height:396px"></div>
  <div class="tb" style="left:1696.5px;top:894px;width:2px;height:396px"></div>
  <div class="tb" style="left:1781.1px;top:894px;width:2px;height:396px"></div>
  <!-- header -->
  <div class="d c" style="left:825px;top:900.7px;width:69px;font-size:28.2px;font-weight:bold">No.</div>
  <div class="d c" style="left:894px;top:900.7px;width:649px;font-size:28.2px;font-weight:bold">Sub <span class="w">Isu</span></div>
  <div class="d c" style="left:1543px;top:900.7px;width:53px;font-size:28.2px;font-weight:bold">U</div>
  <div class="d c" style="left:1596px;top:900.7px;width:47px;font-size:28.2px;font-weight:bold">S</div>
  <div class="d c" style="left:1643px;top:900.7px;width:54px;font-size:28.2px;font-weight:bold">G</div>
  <div class="d c" style="left:1697px;top:900.7px;width:85px;font-size:28.2px;font-weight:bold">Skor</div>
  <!-- row1 -->
  <div class="d c" style="left:825px;top:974.2px;width:69px;font-size:28.2px;font-weight:bold">1</div>
  <div class="d" style="left:909px;top:950.2px;font-size:28.2px">Belum <span class="w">optimalnya</span> <span class="w">pengaruh</span> <span class="w">insentif</span> <span class="w">terhadap</span></div>
  <div class="d" style="left:909px;top:998.2px;font-size:28.2px"><span class="w">penerapan</span> <span class="w">manajemen</span> <span class="w">energi</span></div>
  <div class="d c" style="left:1543px;top:974.7px;width:53px;font-size:28.2px">5</div>
  <div class="d c" style="left:1596px;top:974.7px;width:47px;font-size:28.2px">4</div>
  <div class="d c" style="left:1643px;top:974.7px;width:54px;font-size:28.2px">4</div>
  <div class="d c" style="left:1697px;top:974.7px;width:85px;font-size:28.2px">13</div>
  <!-- row2 -->
  <div class="d c" style="left:825px;top:1073.2px;width:69px;font-size:28.2px;font-weight:bold">2</div>
  <div class="d" style="left:906.5px;top:1048.6px;font-size:28.2px">Belum <span class="w">optimalnya</span> <span class="w">pengaruh</span> <span class="w">disinsentif</span> <span class="w">terhadap</span></div>
  <div class="d" style="left:906.5px;top:1096.9px;font-size:28.2px"><span class="w">penerapan</span> <span class="w">manajemen</span> <span class="w">energi</span></div>
  <div class="d c" style="left:1543px;top:1073.7px;width:53px;font-size:28.2px">4</div>
  <div class="d c" style="left:1596px;top:1073.7px;width:47px;font-size:28.2px">4</div>
  <div class="d c" style="left:1643px;top:1073.7px;width:54px;font-size:28.2px">4</div>
  <div class="d c" style="left:1697px;top:1073.7px;width:85px;font-size:28.2px">12</div>
  <!-- row3 -->
  <div class="d c" style="left:825px;top:1196.2px;width:69px;font-size:28.2px;font-weight:bold">3</div>
  <div class="d" style="left:906.5px;top:1146.9px;font-size:28.2px"><span class="w">Kurangnya</span> <span class="w">koordinasi</span> <span class="w">antar</span> <span class="w">pemerintah</span> <span class="w">pusat</span> dan</div>
  <div class="d" style="left:906.5px;top:1195.2px;font-size:28.2px"><span class="w">pemerintah</span> <span class="w">daerah</span> <span class="w">terkait</span> <span class="w">penerapan</span> <span class="w">manajemen</span></div>
  <div class="d" style="left:906.5px;top:1243.8px;font-size:28.2px"><span class="w">energi</span></div>
  <div class="d c" style="left:1543px;top:1196.7px;width:53px;font-size:28.2px">3</div>
  <div class="d c" style="left:1596px;top:1196.7px;width:47px;font-size:28.2px">3</div>
  <div class="d c" style="left:1643px;top:1196.7px;width:54px;font-size:28.2px">4</div>
  <div class="d c" style="left:1697px;top:1196.7px;width:85px;font-size:28.2px">10</div>
  <!-- after -->
  <div class="d" style="left:824.4px;top:1365.0px;font-size:30.75px">1.4.3. <span class="w">Analisis</span> Akar Masalah Sub <span class="w">Isu</span> <span class="w">Prioritas</span></div>
  <div class="d j" style="left:870px;top:1418.6px;width:912px;font-size:30.75px">Isu yang menjadi prioritas adalah “Rendahnya Kepatuhan, Pelaksanaan</div>
  <div class="d j" style="left:824.4px;top:1471.5px;width:958px;font-size:30.75px">dan Pelaporan Manajemen Energi”. Pencarian akar masalah isu bisa</div>
  <!-- cursor -->
  <svg class="a" style="left:1963px;top:1102px" width="22" height="36" viewBox="0 0 22 36"><path d="M3 2.5 H19 M11 2.5 V33 M3 33 H19" fill="none" stroke="#000" stroke-width="2.6"/><path d="M3 2.5 H19 M3 33 H19" fill="none" stroke="#fff" stroke-width="0.6" transform="translate(0,-1.6)" opacity="0"/></svg>
  <div class="a" style="left:2468px;top:878px;width:8px;height:48px;border-radius:4px;background:#d5d8da"></div>
  <div id="status" class="a"></div>
  <div class="a t" style="left:22px;top:1520px;font-size:19.6px;color:#e8e8e8">Page 12 of 24</div>
  <div class="a t" style="left:178.5px;top:1520px;font-size:20.3px;color:#e8e8e8">4051 words</div>
  <svg class="a" style="left:320px;top:1514px" width="32" height="30" viewBox="320 1514 32 30">
    <path d="M333.5 1539.5 H322.8 V1517.6 H333.5 V1539.5 M333.5 1527.5 V1517.6 H347.5 V1527" fill="none" stroke="#ececec" stroke-width="1.8"/>
    <path d="M337 1541.5 L349.5 1528.5 M337.5 1528.5 L349.5 1541.5" stroke="#ececec" stroke-width="1.8"/>
  </svg>
  <svg class="a" style="left:387px;top:1514px" width="32" height="30" viewBox="387 1514 32 30">
    <path d="M398 1540 H390.3 V1517.6 H415.8 V1525" fill="none" stroke="#ececec" stroke-width="1.8"/>
    <path d="M390.3 1521.5 H415.8" stroke="#ececec" stroke-width="1.6"/>
    <path d="M393 1526.5 H399 M393 1531 H398 M393 1535.5 H398" stroke="#ececec" stroke-width="1.6"/>
    <circle cx="408" cy="1533" r="7.5" fill="none" stroke="#ececec" stroke-width="1.9"/><circle cx="408" cy="1533" r="3.6" fill="#ececec"/>
  </svg>
  <svg class="a" style="left:448px;top:1513px" width="32" height="32" viewBox="448 1513 32 32">
    <circle cx="461.3" cy="1518.5" r="2.6" fill="none" stroke="#ececec" stroke-width="1.6"/>
    <path d="M451 1522.5 C453 1525 457 1526 461 1526 C465 1526 469 1525 471.5 1522.5 M457.5 1526 L455 1540.5 C455 1542 457 1542 457.5 1540.5 L461 1532 L463 1536" fill="none" stroke="#ececec" stroke-width="1.7" stroke-linecap="round"/>
    <path d="M465 1541.5 L476.5 1529.5 M465.5 1529.5 L476.5 1541.5" stroke="#ececec" stroke-width="1.7"/>
  </svg>
  <div class="a t" style="left:484px;top:1520px;font-size:20px;font-weight:bold;color:#f0f0f0">Accessibility: Investigate</div>
  <svg class="a" style="left:1783px;top:1512px" width="33" height="32" viewBox="1783 1512 33 32">
    <path d="M1786 1520.5 V1515.5 H1791 M1807.5 1515.5 H1812.5 V1520.5 M1812.5 1535 V1540.5 H1807.5 M1791 1540.5 H1786 V1535" fill="none" stroke="#ececec" stroke-width="1.8"/>
    <path d="M1792.5 1537 V1520 H1801.5 L1806 1524.5 V1537 Z M1801.5 1520 V1524.5 H1806" fill="none" stroke="#ececec" stroke-width="1.6"/>
  </svg>
  <div class="a t" style="left:1819.5px;top:1519.5px;font-size:18.7px;color:#ececec">Focus</div>
  <svg class="a" style="left:1914px;top:1512px" width="30" height="30" viewBox="1914 1512 30 30">
    <path d="M1916.5 1515.5 H1927 C1928.5 1515.5 1929 1516.5 1929 1517.5 C1929 1516.5 1929.5 1515.5 1931 1515.5 H1941.5 V1538.5 H1931 C1929.5 1538.5 1929 1539.5 1929 1540 C1929 1539.5 1928.5 1538.5 1927 1538.5 H1916.5 Z M1929 1517.5 V1540" fill="none" stroke="#ececec" stroke-width="1.7"/>
    <path d="M1919.5 1521.5 H1925.5 M1919.5 1525.5 H1925.5 M1919.5 1529.5 H1925.5 M1919.5 1533.5 H1925.5 M1932.5 1521.5 H1938.5 M1932.5 1525.5 H1938.5 M1932.5 1529.5 H1938.5 M1932.5 1533.5 H1938.5" stroke="#ececec" stroke-width="1.6"/>
  </svg>
  <div class="a" style="left:1969px;top:1508px;width:77px;height:41px;background:#5a5859"></div>
  <svg class="a" style="left:1993px;top:1512px" width="28" height="32" viewBox="1993 1512 28 32">
    <rect x="1996.5" y="1515.5" width="20" height="25.5" fill="none" stroke="#ececec" stroke-width="1.9"/>
    <path d="M2000 1520.5 H2013 M2000 1524.5 H2013 M2000 1528.5 H2013 M2000 1532.5 H2013 M2000 1536.5 H2013" stroke="#ececec" stroke-width="1.7"/>
  </svg>
  <svg class="a" style="left:2068px;top:1512px" width="32" height="32" viewBox="2068 1512 32 32">
    <path d="M2080 1540 H2071 V1515.5 H2096 V1527" fill="none" stroke="#ececec" stroke-width="1.8"/>
    <path d="M2074 1521 H2093 M2074 1525 H2088 M2074 1529.5 H2082 M2074 1534 H2081" stroke="#ececec" stroke-width="1.6"/>
    <circle cx="2089.5" cy="1533.5" r="7.8" fill="#4f4e50" stroke="#ececec" stroke-width="1.8"/>
    <path d="M2081.7 1533.5 H2097.3 M2089.5 1525.7 V1541.3 M2083.5 1529 H2095.5 M2083.5 1538 H2095.5" stroke="#ececec" stroke-width="1.3"/>
    <ellipse cx="2089.5" cy="1533.5" rx="3.6" ry="7.8" fill="none" stroke="#ececec" stroke-width="1.3"/>
  </svg>
  <div class="a" style="left:2133px;top:1526.5px;width:15px;height:1.8px;background:#e0e0e0"></div>
  <div class="a" style="left:2158.5px;top:1526.5px;width:190px;height:1.8px;background:#cfcfcf"></div>
  <div class="a" style="left:2248px;top:1516px;width:11px;height:22.5px;border-radius:2px;background:#cfcfd0"></div>
  <div class="a" style="left:2358px;top:1526.5px;width:15.5px;height:1.8px;background:#e0e0e0"></div>
  <div class="a" style="left:2365px;top:1519px;width:1.8px;height:16px;background:#e0e0e0"></div>
  <div class="a t" style="left:2398px;top:1519.5px;font-size:19.7px;color:#ececec">100%</div>
<div class="a" style="left:2496px;top:210px;width:352px;height:198px;overflow:hidden;border-radius:9px 9px 0 0"><div class="a" style="left:0;top:0;width:352px;height:200px;background:#3b69aa;background-image:linear-gradient(0deg,rgba(25,60,130,0.22) 1.5px,transparent 1.5px),linear-gradient(90deg,rgba(25,60,130,0.18) 1.5px,transparent 1.5px),linear-gradient(90deg,rgba(20,50,110,0.07) 50%,rgba(255,255,255,0.03) 50%),linear-gradient(0deg,rgba(20,50,110,0.06) 50%,rgba(255,255,255,0.02) 50%);background-size:25px 25px,25px 25px,75px 75px,100px 100px;background-position:0 11px,13px 0,12px 0,0 8px"></div><div class="a" style="left:3.5px;top:2.5px;width:16px;height:16px;border-radius:50%;background:#d6cc3c;border:2.2px solid #141414"></div><div class="a" style="left:22.5px;top:4px;font-size:7.6px;line-height:7.5px;font-weight:bold;color:#dcb35a;white-space:nowrap;letter-spacing:-0.15px">Kementerian Energi dan Sumber Daya Mineral<br>Republik Indonesia</div><div class="a" style="left:0;top:23.5px;width:140px;height:1.2px;background:rgba(215,190,140,0.8)"></div><svg class="a" style="left:0;top:0" width="352" height="200" viewBox="0 0 352 200"><polygon points="289,0 352,0 352,21 300,21" fill="#eed24e"/><path d="M287,0 L297,22" stroke="#e6eef8" stroke-width="1.2" fill="none"/><rect x="303" y="7" width="42" height="6" fill="#c0392e" opacity="0.8"/><polygon points="352,24 302,62 352,108" fill="#5db445"/><polygon points="352,40 320,64 352,90" fill="#6ebe4a"/><circle cx="346" cy="63" r="15" fill="#c5c04a" opacity="0.85"/><path d="M313,21 L294,37 L352,96" stroke="#e5e24a" stroke-width="1.2" fill="none"/><polygon points="303,86 312,78 352,118 352,131" fill="#e9ebef"/><polygon points="0,137 0,157 16,157" fill="#e4e6ea"/><rect x="0" y="155" width="62" height="45" fill="#efb845"/><rect x="62" y="192" width="230" height="8" fill="#eceff3"/></svg><svg class="a" style="left:0;top:0" width="352" height="200" viewBox="0 0 352 200"><defs><filter id="bl" x="-20%" y="-20%" width="140%" height="140%"><feGaussianBlur stdDeviation="1.6"/></filter><radialGradient id="fsh" cx="0.5" cy="0.4" r="0.6"><stop offset="0.55" stop-color="#000" stop-opacity="0"/><stop offset="1" stop-color="#000" stop-opacity="0.25"/></radialGradient></defs><g filter="url(#bl)"><path d="M128 118 C127 95 128 72 140 58 C155 47 190 47 205 58 C217 72 217 95 215 118 C212 135 203 148 190 155 C180 160 164 160 154 155 C141 148 131 135 128 118 Z" fill="#dac7bb"/><path d="M128 118 C127 95 128 72 140 58 C155 47 190 47 205 58 C217 72 217 95 215 118 C212 135 203 148 190 155 C180 160 164 160 154 155 C141 148 131 135 128 118 Z" fill="url(#fsh)"/><ellipse cx="125" cy="110" rx="6" ry="12" fill="#c9b0a2"/><ellipse cx="218" cy="110" rx="6" ry="12" fill="#c9b0a2"/><path d="M124 92 C116 55 138 30 172 30 C208 30 228 55 219 92 C214 72 205 64 182 62 C158 60 140 66 130 86 Z" fill="#4b4446"/><path d="M135 86 Q148 80 160 85 M184 85 Q197 80 210 86" stroke="#5a4a48" stroke-width="3" fill="none"/><circle cx="148.5" cy="104" r="18" fill="none" stroke="#3a3030" stroke-width="2.6"/><circle cx="197.5" cy="105" r="17.5" fill="none" stroke="#3a3030" stroke-width="2.6"/><path d="M166.5 101 H180" stroke="#3a3030" stroke-width="2.5"/><path d="M140 106 Q148 110 157 106 M189 107 Q197 111 206 107" stroke="#5a4440" stroke-width="2" fill="none"/><path d="M165 128 Q172 133 180 128" stroke="#b08a7c" stroke-width="3" fill="none"/><path d="M158 145 Q172 148 187 144" stroke="#a07466" stroke-width="2.5" fill="none"/></g></svg><div class="a" style="left:4.5px;top:154.5px;width:344px;height:39.5px;border-radius:9px;background:linear-gradient(90deg,rgba(42,42,44,0.93),rgba(34,42,58,0.93))"></div><svg class="a" style="left:6px;top:161.5px" width="30" height="27" viewBox="0 0 30 27"><rect x="12" y="2" width="9" height="15" rx="4.5" fill="#df4438"/><path d="M9 12 C9 17 12 20 16.5 20 C21 20 24 17 24 12 M16.5 20 V24.5 M12 24.5 H21" fill="none" stroke="#df4438" stroke-width="2.2"/><path d="M3 25.5 L26 2.5" stroke="#df4438" stroke-width="2.2"/></svg><div class="a t" style="left:45px;top:163.5px;font-size:25px;color:#fbfbfb;-webkit-text-stroke:0.45px #fbfbfb">Kel 4 - Muhammad Yusu...</div></div>
<div class="a" style="left:2496px;top:408px;width:352px;height:198px;overflow:hidden;border-radius:0"><div class="a" style="left:0;top:0;width:352px;height:200px;background:#3b69aa;background-image:linear-gradient(0deg,rgba(25,60,130,0.22) 1.5px,transparent 1.5px),linear-gradient(90deg,rgba(25,60,130,0.18) 1.5px,transparent 1.5px),linear-gradient(90deg,rgba(20,50,110,0.07) 50%,rgba(255,255,255,0.03) 50%),linear-gradient(0deg,rgba(20,50,110,0.06) 50%,rgba(255,255,255,0.02) 50%);background-size:25px 25px,25px 25px,75px 75px,100px 100px;background-position:0 11px,13px 0,12px 0,0 8px"></div><div class="a" style="left:3.5px;top:2.5px;width:16px;height:16px;border-radius:50%;background:#d6cc3c;border:2.2px solid #141414"></div><div class="a" style="left:22.5px;top:4px;font-size:7.6px;line-height:7.5px;font-weight:bold;color:#dcb35a;white-space:nowrap;letter-spacing:-0.15px">Kementerian Energi dan Sumber Daya Mineral<br>Republik Indonesia</div><div class="a" style="left:0;top:23.5px;width:140px;height:1.2px;background:rgba(215,190,140,0.8)"></div><svg class="a" style="left:0;top:0" width="352" height="200" viewBox="0 0 352 200"><polygon points="289,0 352,0 352,21 300,21" fill="#eed24e"/><path d="M287,0 L297,22" stroke="#e6eef8" stroke-width="1.2" fill="none"/><rect x="303" y="7" width="42" height="6" fill="#c0392e" opacity="0.8"/><polygon points="352,24 302,62 352,108" fill="#5db445"/><polygon points="352,40 320,64 352,90" fill="#6ebe4a"/><circle cx="346" cy="63" r="15" fill="#c5c04a" opacity="0.85"/><path d="M313,21 L294,37 L352,96" stroke="#e5e24a" stroke-width="1.2" fill="none"/><polygon points="303,86 312,78 352,118 352,131" fill="#e9ebef"/><polygon points="0,137 0,157 16,157" fill="#e4e6ea"/><rect x="0" y="155" width="62" height="45" fill="#efb845"/><rect x="62" y="192" width="230" height="8" fill="#eceff3"/></svg><svg class="a" style="left:0;top:0" width="352" height="200" viewBox="0 0 352 200"><defs><filter id="bl" x="-20%" y="-20%" width="140%" height="140%"><feGaussianBlur stdDeviation="1.6"/></filter><radialGradient id="fsh" cx="0.5" cy="0.4" r="0.6"><stop offset="0.55" stop-color="#000" stop-opacity="0"/><stop offset="1" stop-color="#000" stop-opacity="0.25"/></radialGradient></defs><g filter="url(#bl)"><rect x="104" y="168" width="140" height="32" fill="#eeece9"/><path d="M102 85 C100 115 104 135 122 148 C135 156 160 158 175 152 C190 145 196 125 196 90 C196 60 180 50 150 50 C120 50 103 60 102 85 Z" fill="#c49e8a"/><ellipse cx="199" cy="108" rx="7" ry="13" fill="#b89080"/><path d="M99 92 C94 55 120 33 152 33 C185 33 200 55 196 95 C190 78 180 70 160 68 C135 68 110 72 104 92 Z" fill="#221b1b"/><rect x="94" y="91" width="46" height="27" rx="7" fill="rgba(235,235,240,0.2)" stroke="#8c8c92" stroke-width="3"/><rect x="146" y="91" width="46" height="27" rx="7" fill="rgba(235,235,240,0.2)" stroke="#8c8c92" stroke-width="3"/><path d="M134 140 Q148 134 165 139" stroke="#5a3028" stroke-width="3.5" fill="none"/></g></svg><div class="a" style="left:4.5px;top:154.5px;width:344px;height:39.5px;border-radius:9px;background:linear-gradient(90deg,rgba(42,42,44,0.93),rgba(34,42,58,0.93))"></div><svg class="a" style="left:6px;top:161.5px" width="30" height="27" viewBox="0 0 30 27"><rect x="12" y="2" width="9" height="15" rx="4.5" fill="#df4438"/><path d="M9 12 C9 17 12 20 16.5 20 C21 20 24 17 24 12 M16.5 20 V24.5 M12 24.5 H21" fill="none" stroke="#df4438" stroke-width="2.2"/><path d="M3 25.5 L26 2.5" stroke="#df4438" stroke-width="2.2"/></svg><div class="a t" style="left:45px;top:163.5px;font-size:25px;color:#fbfbfb;-webkit-text-stroke:0.45px #fbfbfb">Kel 4 - Imam Miftahul K...</div></div>
<div class="a" style="left:2496px;top:606px;width:352px;height:198px;overflow:hidden;border-radius:0"><div class="a" style="left:0;top:0;width:352px;height:200px;background:#3b69aa;background-image:linear-gradient(0deg,rgba(25,60,130,0.22) 1.5px,transparent 1.5px),linear-gradient(90deg,rgba(25,60,130,0.18) 1.5px,transparent 1.5px),linear-gradient(90deg,rgba(20,50,110,0.07) 50%,rgba(255,255,255,0.03) 50%),linear-gradient(0deg,rgba(20,50,110,0.06) 50%,rgba(255,255,255,0.02) 50%);background-size:25px 25px,25px 25px,75px 75px,100px 100px;background-position:0 11px,13px 0,12px 0,0 8px"></div><div class="a" style="left:0;top:0;width:352px;height:200px;transform:scaleX(-1)"><div class="a" style="left:3.5px;top:2.5px;width:16px;height:16px;border-radius:50%;background:#d6cc3c;border:2.2px solid #141414"></div><div class="a" style="left:22.5px;top:4px;font-size:7.6px;line-height:7.5px;font-weight:bold;color:#dcb35a;white-space:nowrap;letter-spacing:-0.15px">Kementerian Energi dan Sumber Daya Mineral<br>Republik Indonesia</div><div class="a" style="left:0;top:23.5px;width:140px;height:1.2px;background:rgba(215,190,140,0.8)"></div><svg class="a" style="left:0;top:0" width="352" height="200" viewBox="0 0 352 200"><polygon points="289,0 352,0 352,21 300,21" fill="#eed24e"/><path d="M287,0 L297,22" stroke="#e6eef8" stroke-width="1.2" fill="none"/><rect x="303" y="7" width="42" height="6" fill="#c0392e" opacity="0.8"/><polygon points="352,24 302,62 352,108" fill="#5db445"/><polygon points="352,40 320,64 352,90" fill="#6ebe4a"/><circle cx="346" cy="63" r="15" fill="#c5c04a" opacity="0.85"/><path d="M313,21 L294,37 L352,96" stroke="#e5e24a" stroke-width="1.2" fill="none"/><polygon points="303,86 312,78 352,118 352,131" fill="#e9ebef"/><polygon points="0,137 0,157 16,157" fill="#e4e6ea"/><rect x="0" y="155" width="62" height="45" fill="#efb845"/><rect x="62" y="192" width="230" height="8" fill="#eceff3"/></svg></div><svg class="a" style="left:0;top:0" width="352" height="200" viewBox="0 0 352 200"><defs><filter id="bl" x="-20%" y="-20%" width="140%" height="140%"><feGaussianBlur stdDeviation="1.6"/></filter><radialGradient id="fsh" cx="0.5" cy="0.4" r="0.6"><stop offset="0.55" stop-color="#000" stop-opacity="0"/><stop offset="1" stop-color="#000" stop-opacity="0.25"/></radialGradient></defs><g filter="url(#bl)"><path d="M117 200 C112 150 120 90 193 75 C260 82 275 150 269 200 Z" fill="#141212"/><path d="M140 200 C140 160 150 140 193 128 C235 140 245 160 245 200 Z" fill="#a67c6c"/><path d="M150 98 L157 101 L140 137 L133 134 Z" fill="#ececec"/><path d="M246 106 L253 104 L264 140 L257 142 Z" fill="#ececec"/></g></svg><div class="a" style="left:4.5px;top:154.5px;width:344px;height:39.5px;border-radius:9px;background:linear-gradient(90deg,rgba(42,42,44,0.93),rgba(34,42,58,0.93))"></div><svg class="a" style="left:6px;top:161.5px" width="30" height="27" viewBox="0 0 30 27"><rect x="12" y="2" width="9" height="15" rx="4.5" fill="#df4438"/><path d="M9 12 C9 17 12 20 16.5 20 C21 20 24 17 24 12 M16.5 20 V24.5 M12 24.5 H21" fill="none" stroke="#df4438" stroke-width="2.2"/><path d="M3 25.5 L26 2.5" stroke="#df4438" stroke-width="2.2"/></svg><div class="a t" style="left:45px;top:163.5px;font-size:25px;color:#fbfbfb;-webkit-text-stroke:0.45px #fbfbfb">Arya Cakrabuana Kusdia...</div></div>
<div class="a" style="left:2496px;top:804px;width:352px;height:194px;overflow:hidden;border-radius:0"><div class="a" style="left:0;top:0;width:352px;height:200px;background:#3b69aa;background-image:linear-gradient(0deg,rgba(25,60,130,0.22) 1.5px,transparent 1.5px),linear-gradient(90deg,rgba(25,60,130,0.18) 1.5px,transparent 1.5px),linear-gradient(90deg,rgba(20,50,110,0.07) 50%,rgba(255,255,255,0.03) 50%),linear-gradient(0deg,rgba(20,50,110,0.06) 50%,rgba(255,255,255,0.02) 50%);background-size:25px 25px,25px 25px,75px 75px,100px 100px;background-position:0 11px,13px 0,12px 0,0 8px"></div><div class="a" style="left:3.5px;top:2.5px;width:16px;height:16px;border-radius:50%;background:#d6cc3c;border:2.2px solid #141414"></div><div class="a" style="left:22.5px;top:4px;font-size:7.6px;line-height:7.5px;font-weight:bold;color:#dcb35a;white-space:nowrap;letter-spacing:-0.15px">Kementerian Energi dan Sumber Daya Mineral<br>Republik Indonesia</div><div class="a" style="left:0;top:23.5px;width:140px;height:1.2px;background:rgba(215,190,140,0.8)"></div><svg class="a" style="left:0;top:0" width="352" height="200" viewBox="0 0 352 200"><polygon points="289,0 352,0 352,21 300,21" fill="#eed24e"/><path d="M287,0 L297,22" stroke="#e6eef8" stroke-width="1.2" fill="none"/><rect x="303" y="7" width="42" height="6" fill="#c0392e" opacity="0.8"/><polygon points="352,24 302,62 352,108" fill="#5db445"/><polygon points="352,40 320,64 352,90" fill="#6ebe4a"/><circle cx="346" cy="63" r="15" fill="#c5c04a" opacity="0.85"/><path d="M313,21 L294,37 L352,96" stroke="#e5e24a" stroke-width="1.2" fill="none"/><polygon points="303,86 312,78 352,118 352,131" fill="#e9ebef"/><polygon points="0,137 0,157 16,157" fill="#e4e6ea"/><rect x="0" y="155" width="62" height="45" fill="#efb845"/><rect x="62" y="192" width="230" height="8" fill="#eceff3"/></svg><svg class="a" style="left:0;top:0" width="352" height="200" viewBox="0 0 352 200"><defs><filter id="bl" x="-20%" y="-20%" width="140%" height="140%"><feGaussianBlur stdDeviation="1.6"/></filter><radialGradient id="fsh" cx="0.5" cy="0.4" r="0.6"><stop offset="0.55" stop-color="#000" stop-opacity="0"/><stop offset="1" stop-color="#000" stop-opacity="0.25"/></radialGradient></defs><g filter="url(#bl)"><path d="M192 110 C194 98 205 93 222 95 L238 108 C244 128 242 150 232 162 C215 168 196 158 192 135 Z" fill="#e2cbbf"/><path d="M196 100 C205 82 225 74 250 74 C290 74 325 92 342 120 C350 135 352 150 352 165 V200 H268 C262 178 258 150 246 125 C238 108 222 96 196 100 Z" fill="#1d1c20"/><path d="M190 127 C194 124 205 124 214 128 C222 127 232 126 240 128" stroke="#9c9ca2" stroke-width="2.2" fill="none"/><rect x="193" y="126" width="22" height="15" rx="5" fill="none" stroke="#9c9ca2" stroke-width="1.8"/><path d="M312 150 C330 145 352 150 352 165 V200 H300 C306 185 302 160 312 150 Z" fill="#dcc0b0"/></g></svg><div class="a" style="left:4.5px;top:154px;width:309px;height:39.5px;border-radius:9px;background:linear-gradient(90deg,rgba(42,42,44,0.93),rgba(34,42,58,0.93))"></div><svg class="a" style="left:6px;top:161px" width="30" height="27" viewBox="0 0 30 27"><rect x="12" y="2" width="9" height="15" rx="4.5" fill="#df4438"/><path d="M9 12 C9 17 12 20 16.5 20 C21 20 24 17 24 12 M16.5 20 V24.5 M12 24.5 H21" fill="none" stroke="#df4438" stroke-width="2.2"/><path d="M3 25.5 L26 2.5" stroke="#df4438" stroke-width="2.2"/></svg><div class="a t" style="left:45px;top:163px;font-size:25px;color:#fbfbfb;-webkit-text-stroke:0.45px #fbfbfb">Kel 4 - Nurul Sakinah B</div></div>
<div class="a" style="left:2494px;top:998.5px;width:357px;height:204px;border:4.5px solid #62cf68;background:#1a1a1a"></div>
<div class="a" style="left:2499.5px;top:1005px;width:346px;height:192px;overflow:hidden"><svg class="a" style="left:0;top:0" width="346" height="192" viewBox="0 0 346 192"><defs><pattern id="brk" width="64" height="37" patternUnits="userSpaceOnUse" x="-10" y="4"><rect width="64" height="37" fill="#e9e9ea"/><path d="M0 0.8 H64 M0 19.3 H64" stroke="#d4d4d7" stroke-width="1.6"/><path d="M0 2 H64 M0 20.5 H64" stroke="#f6f6f7" stroke-width="1"/><path d="M1 0 V18.5 M33 18.5 V37" stroke="#d7d7da" stroke-width="1.5"/></pattern></defs><rect width="346" height="192" fill="url(#brk)"/></svg><svg class="a" style="left:0;top:0" width="346" height="192" viewBox="0 0 346 192"><defs><filter id="bl5"><feGaussianBlur stdDeviation="1.3"/></filter></defs><g filter="url(#bl5)"><path d="M92 192 C100 176 118 164 140 160 L150 172 L200 172 L214 160 C236 164 256 176 268 192 Z" fill="#6b6157"/><path d="M130 105 C128 135 138 168 165 170 C192 170 204 140 203 105 C202 88 188 78 166 78 C144 78 131 88 130 105 Z" fill="#c7997e"/><ellipse cx="204" cy="128" rx="5" ry="10" fill="#b88a70"/><path d="M124 112 C118 82 136 64 165 64 C195 63 210 82 206 112 C200 96 192 90 170 92 C150 92 134 98 124 112 Z" fill="#231d1b"/><rect x="127" y="113" width="34" height="22" rx="6" fill="rgba(255,255,255,0.08)" stroke="#171313" stroke-width="4"/><rect x="167" y="113" width="35" height="22" rx="6" fill="rgba(255,255,255,0.08)" stroke="#171313" stroke-width="4"/><path d="M161 122 H167 M202 118 L210 116" stroke="#171313" stroke-width="3"/><path d="M146 151 Q163 162 182 151 Q163 157 146 151 Z" fill="#f2eee8" stroke="#5a3028" stroke-width="2"/><path d="M156 192 C158 178 166 167 180 166 C196 168 210 178 210 192 Z" fill="#c39272"/></g></svg><div class="a" style="left:2px;top:151px;width:87px;height:40px;border-radius:9px;background:rgba(42,42,44,0.92)"></div><div class="a t" style="left:9px;top:161px;font-size:26px;color:#fbfbfb;-webkit-text-stroke:0.35px #fbfbfb">timtim</div></div>
<div class="a" style="left:2496px;top:1203.5px;width:352px;height:195px;overflow:hidden;border-radius:0"><div class="a" style="left:0;top:0;width:352px;height:200px;background:#3b69aa;background-image:linear-gradient(0deg,rgba(25,60,130,0.22) 1.5px,transparent 1.5px),linear-gradient(90deg,rgba(25,60,130,0.18) 1.5px,transparent 1.5px),linear-gradient(90deg,rgba(20,50,110,0.07) 50%,rgba(255,255,255,0.03) 50%),linear-gradient(0deg,rgba(20,50,110,0.06) 50%,rgba(255,255,255,0.02) 50%);background-size:25px 25px,25px 25px,75px 75px,100px 100px;background-position:0 11px,13px 0,12px 0,0 8px"></div><div class="a" style="left:3.5px;top:2.5px;width:16px;height:16px;border-radius:50%;background:#d6cc3c;border:2.2px solid #141414"></div><div class="a" style="left:22.5px;top:4px;font-size:7.6px;line-height:7.5px;font-weight:bold;color:#dcb35a;white-space:nowrap;letter-spacing:-0.15px">Kementerian Energi dan Sumber Daya Mineral<br>Republik Indonesia</div><div class="a" style="left:0;top:23.5px;width:140px;height:1.2px;background:rgba(215,190,140,0.8)"></div><svg class="a" style="left:0;top:0" width="352" height="200" viewBox="0 0 352 200"><polygon points="289,0 352,0 352,21 300,21" fill="#eed24e"/><path d="M287,0 L297,22" stroke="#e6eef8" stroke-width="1.2" fill="none"/><rect x="303" y="7" width="42" height="6" fill="#c0392e" opacity="0.8"/><polygon points="352,24 302,62 352,108" fill="#5db445"/><polygon points="352,40 320,64 352,90" fill="#6ebe4a"/><circle cx="346" cy="63" r="15" fill="#c5c04a" opacity="0.85"/><path d="M313,21 L294,37 L352,96" stroke="#e5e24a" stroke-width="1.2" fill="none"/><polygon points="303,86 312,78 352,118 352,131" fill="#e9ebef"/><polygon points="0,137 0,157 16,157" fill="#e4e6ea"/><rect x="0" y="155" width="62" height="45" fill="#efb845"/><rect x="62" y="192" width="230" height="8" fill="#eceff3"/></svg><svg class="a" style="left:0;top:0" width="352" height="200" viewBox="0 0 352 200"><defs><filter id="bl" x="-20%" y="-20%" width="140%" height="140%"><feGaussianBlur stdDeviation="1.6"/></filter><radialGradient id="fsh" cx="0.5" cy="0.4" r="0.6"><stop offset="0.55" stop-color="#000" stop-opacity="0"/><stop offset="1" stop-color="#000" stop-opacity="0.25"/></radialGradient></defs><g filter="url(#bl)"><path d="M100 20 C98 100 105 150 125 175 C150 195 215 195 240 170 C258 140 260 90 256 20 Z" fill="#c39888"/><path d="M85 95 C75 50 85 10 120 -5 H235 C265 10 270 50 262 85 C255 45 250 28 235 20 C200 10 150 12 125 22 C108 35 102 60 100 98 Z" fill="#1f1919"/><path d="M115 72 Q138 62 160 70 M195 70 Q220 62 240 72" stroke="#2a1f1c" stroke-width="5" fill="none"/><path d="M124 100 Q140 94 155 100 M200 100 Q215 94 232 100" stroke="#4a302a" stroke-width="3.5" fill="none"/><path d="M138 160 Q176 150 215 160 L210 170 Q176 180 142 170 Z" fill="#3a2420"/><path d="M148 166 Q176 176 204 166" stroke="#f2efea" stroke-width="7" fill="none"/></g></svg><div class="a" style="left:4.5px;top:151px;width:344px;height:39.5px;border-radius:9px;background:linear-gradient(90deg,rgba(42,42,44,0.93),rgba(34,42,58,0.93))"></div><div class="a t" style="left:12.5px;top:160px;font-size:25px;color:#fbfbfb;-webkit-text-stroke:0.45px #fbfbfb">Kel 4 - Muhammad Yoga Al...</div></div>
<div class="a" style="left:2496px;top:1398.5px;width:352px;height:197px;overflow:hidden;border-radius:0 0 11px 11px"><div class="a" style="left:0;top:0;width:352px;height:200px;background:#3b69aa;background-image:linear-gradient(0deg,rgba(25,60,130,0.22) 1.5px,transparent 1.5px),linear-gradient(90deg,rgba(25,60,130,0.18) 1.5px,transparent 1.5px),linear-gradient(90deg,rgba(20,50,110,0.07) 50%,rgba(255,255,255,0.03) 50%),linear-gradient(0deg,rgba(20,50,110,0.06) 50%,rgba(255,255,255,0.02) 50%);background-size:25px 25px,25px 25px,75px 75px,100px 100px;background-position:0 11px,13px 0,12px 0,0 8px"></div><div class="a" style="left:3.5px;top:2.5px;width:16px;height:16px;border-radius:50%;background:#d6cc3c;border:2.2px solid #141414"></div><div class="a" style="left:22.5px;top:4px;font-size:7.6px;line-height:7.5px;font-weight:bold;color:#dcb35a;white-space:nowrap;letter-spacing:-0.15px">Kementerian Energi dan Sumber Daya Mineral<br>Republik Indonesia</div><div class="a" style="left:0;top:23.5px;width:140px;height:1.2px;background:rgba(215,190,140,0.8)"></div><svg class="a" style="left:0;top:0" width="352" height="200" viewBox="0 0 352 200"><polygon points="289,0 352,0 352,21 300,21" fill="#eed24e"/><path d="M287,0 L297,22" stroke="#e6eef8" stroke-width="1.2" fill="none"/><rect x="303" y="7" width="42" height="6" fill="#c0392e" opacity="0.8"/><polygon points="352,24 302,62 352,108" fill="#5db445"/><polygon points="352,40 320,64 352,90" fill="#6ebe4a"/><circle cx="346" cy="63" r="15" fill="#c5c04a" opacity="0.85"/><path d="M313,21 L294,37 L352,96" stroke="#e5e24a" stroke-width="1.2" fill="none"/><polygon points="303,86 312,78 352,118 352,131" fill="#e9ebef"/><polygon points="0,137 0,157 16,157" fill="#e4e6ea"/><rect x="0" y="155" width="62" height="45" fill="#efb845"/><rect x="62" y="192" width="230" height="8" fill="#eceff3"/></svg><svg class="a" style="left:0;top:0" width="352" height="200" viewBox="0 0 352 200"><defs><filter id="bl" x="-20%" y="-20%" width="140%" height="140%"><feGaussianBlur stdDeviation="1.6"/></filter><radialGradient id="fsh" cx="0.5" cy="0.4" r="0.6"><stop offset="0.55" stop-color="#000" stop-opacity="0"/><stop offset="1" stop-color="#000" stop-opacity="0.25"/></radialGradient></defs><g filter="url(#bl)"><path d="M140 110 C138 150 140 185 150 200 H262 C270 170 268 130 262 90 C240 60 170 60 140 90 Z" fill="#d6b6a5"/><path d="M131 112 C124 60 160 27 205 27 C252 27 285 60 277 128 C270 112 262 98 248 92 C250 104 240 116 226 110 C214 96 210 75 204 70 C194 82 175 92 158 94 C148 97 140 104 138 126 Z" fill="#141111"/><path d="M160 134 Q178 126 196 134 M222 134 Q240 126 256 134" stroke="#3a2a26" stroke-width="4" fill="none"/></g></svg><div class="a" style="left:4.5px;top:154px;width:344px;height:39.5px;border-radius:9px;background:linear-gradient(90deg,rgba(42,42,44,0.93),rgba(34,42,58,0.93))"></div><svg class="a" style="left:6px;top:161px" width="30" height="27" viewBox="0 0 30 27"><rect x="12" y="2" width="9" height="15" rx="4.5" fill="#df4438"/><path d="M9 12 C9 17 12 20 16.5 20 C21 20 24 17 24 12 M16.5 20 V24.5 M12 24.5 H21" fill="none" stroke="#df4438" stroke-width="2.2"/><path d="M3 25.5 L26 2.5" stroke="#df4438" stroke-width="2.2"/></svg><div class="a t" style="left:45px;top:163px;font-size:25px;color:#fbfbfb;-webkit-text-stroke:0.45px #fbfbfb">Kel 4 - Alkautsar Winet...</div></div>
<svg class="a" style="left:2634px;top:144px" width="76" height="36" viewBox="0 0 76 36"><path d="M5 30 L38 7 L71 30" fill="none" stroke="#535d5f" stroke-width="6" stroke-linecap="round" stroke-linejoin="round"/></svg>
<svg class="a" style="left:2634px;top:1624px" width="76" height="36" viewBox="0 0 76 36"><path d="M5 6 L38 29 L71 6" fill="none" stroke="#c9cbcc" stroke-width="6" stroke-linecap="round" stroke-linejoin="round"/></svg>
  <!-- pencil -->
  <div class="a" style="left:56.3px;top:1564.3px;width:95.6px;height:95.6px;border-radius:50%;background:#28292c"></div>
  <svg class="a" style="left:78px;top:1584px" width="52" height="56" viewBox="78 1584 52 56">
    <path d="M84.8 1618.5 L113.9 1589.6 L123.2 1598.5 L94.6 1627.6 H84.8 Z" fill="none" stroke="#78f59a" stroke-width="3" stroke-linejoin="round"/>
    <path d="M107.3 1596.3 L116.3 1605.3" stroke="#78f59a" stroke-width="3"/>
    <path d="M84.5 1634.5 H124" stroke="#78f59a" stroke-width="3.2" stroke-linecap="round"/>
  </svg>
  <style>.lb{position:absolute;top:1758.8px;font-size:25px;line-height:1;white-space:nowrap;color:#cdd5d6;text-align:center;-webkit-text-stroke:0.5px #cdd5d6}
  .ic{position:absolute}</style>
  <!-- audio -->
  <svg class="ic" style="left:66px;top:1690px" width="54" height="56" viewBox="66 1690 54 56">
    <rect x="83.8" y="1696.3" width="16.5" height="32.5" rx="8.25" fill="none" stroke="#fff" stroke-width="2.7"/>
    <path d="M78.5 1719 C78.5 1729 84 1734.3 92 1734.3 C100 1734.3 105.8 1729 105.8 1719 M92 1734.3 V1741.3 M83.5 1741.3 H100.8" fill="none" stroke="#fff" stroke-width="2.7" stroke-linecap="round"/>
    <path d="M71.5 1740.5 L113 1699.5" stroke="#e8335b" stroke-width="4.2" stroke-linecap="round"/>
  </svg>
  <svg class="ic" style="left:146px;top:1711px" width="20" height="14" viewBox="0 0 20 14"><path d="M2.5 11 L10 3 L17.5 11" fill="none" stroke="#fff" stroke-width="2.6" stroke-linecap="round" stroke-linejoin="round"/></svg>
  <div class="lb" style="left:42px;width:100px">Audio</div>
  <!-- video -->
  <svg class="ic" style="left:243px;top:1703px" width="54" height="36" viewBox="243 1703 54 36">
    <rect x="247.3" y="1708.1" width="30" height="25.5" rx="7" fill="none" stroke="#fff" stroke-width="2.7"/>
    <path d="M282.5 1716.5 L292.3 1709.5 V1732 L282.5 1725 Z" fill="none" stroke="#fff" stroke-width="2.7" stroke-linejoin="round"/>
  </svg>
  <svg class="ic" style="left:324px;top:1711px" width="20" height="14" viewBox="0 0 20 14"><path d="M2.5 11 L10 3 L17.5 11" fill="none" stroke="#fff" stroke-width="2.6" stroke-linecap="round" stroke-linejoin="round"/></svg>
  <div class="lb" style="left:219.5px;width:100px">Video</div>
  <!-- participants -->
  <svg class="ic" style="left:535px;top:1700px" width="42" height="42" viewBox="535 1700 42 42">
    <circle cx="548.4" cy="1708.8" r="5" fill="none" stroke="#fff" stroke-width="2.7"/>
    <circle cx="562.2" cy="1715.3" r="5.3" fill="none" stroke="#fff" stroke-width="2.7"/>
    <path d="M551 1737.3 H544.5 C541 1737.3 539 1735 539 1731.5 C539 1726 543 1721.5 549 1721.5 C551.5 1721.5 553.5 1722.3 555 1723.3" fill="none" stroke="#fff" stroke-width="2.7" stroke-linecap="round"/>
    <rect x="554.8" y="1726.8" width="18" height="10.5" rx="5.25" fill="none" stroke="#fff" stroke-width="2.7"/>
  </svg>
  <div class="a t" style="left:588px;top:1708.5px;font-size:20.8px;color:#b8c6c6;-webkit-text-stroke:0.3px #b8c6c6">13</div>
  <svg class="ic" style="left:638px;top:1711px" width="20" height="14" viewBox="0 0 20 14"><path d="M2.5 11 L10 3 L17.5 11" fill="none" stroke="#fff" stroke-width="2.6" stroke-linecap="round" stroke-linejoin="round"/></svg>
  <div class="lb" style="left:485.5px;width:140px">Participants</div>
  <!-- chat -->
  <svg class="ic" style="left:736px;top:1684px" width="70" height="60" viewBox="736 1684 70 60">
    <path d="M750 1708 C750.5 1701 753 1698.3 760 1698.3 H775" fill="none" stroke="#fff" stroke-width="2.2" stroke-linecap="round"/>
    <path d="M778 1724.5 L782 1720" stroke="#fff" stroke-width="2.2" stroke-linecap="round"/>
    <path d="M748 1708.9 H765 C770 1708.9 773.8 1712.5 773.8 1718 V1727 C773.8 1732.5 770 1736.3 765 1736.3 H759 C756 1739 752.5 1740.5 749 1741 C750.5 1739.5 751 1738 751 1736.3 H748.5 C743.5 1736.3 739.9 1732.5 739.9 1727 V1718 C739.9 1712.5 743.5 1708.9 748 1708.9 Z" fill="none" stroke="#fff" stroke-width="2.7" stroke-linejoin="round"/>
    <circle cx="749.5" cy="1722.3" r="2" fill="#fff"/><circle cx="756.8" cy="1722.3" r="2" fill="#fff"/><circle cx="764.2" cy="1722.3" r="2" fill="#fff"/>
    <circle cx="786.8" cy="1703.8" r="15.3" fill="#d42a40" stroke="#fff" stroke-width="2"/>
    <text x="786.8" y="1711.5" text-anchor="middle" font-family="Liberation Sans" font-weight="bold" font-size="21" fill="#fff">2</text>
  </svg>
  <svg class="ic" style="left:816px;top:1711px" width="20" height="14" viewBox="0 0 20 14"><path d="M2.5 11 L10 3 L17.5 11" fill="none" stroke="#fff" stroke-width="2.6" stroke-linecap="round" stroke-linejoin="round"/></svg>
  <div class="lb" style="left:711.5px;width:100px">Chat</div>
  <!-- react -->
  <svg class="ic" style="left:904px;top:1695px" width="56" height="50" viewBox="904 1695 56 50">
    <path d="M931.5 1740 L912.5 1717 C906 1709 911 1699.5 919.5 1700 C925.5 1700.3 929 1704.5 930.5 1708.5 C933.5 1703.5 938.5 1700 944.5 1701.5 C953 1703.5 956 1713 949.5 1719.5 Z" fill="none" stroke="#fff" stroke-width="2.7" stroke-linejoin="round" transform="rotate(-12 932 1720)"/>
  </svg>
  <svg class="ic" style="left:978px;top:1711px" width="20" height="14" viewBox="0 0 20 14"><path d="M2.5 11 L10 3 L17.5 11" fill="none" stroke="#fff" stroke-width="2.6" stroke-linecap="round" stroke-linejoin="round"/></svg>
  <div class="lb" style="left:882px;width:100px">React</div>
  <!-- share -->
  <div class="a" style="left:1070px;top:1700px;width:48px;height:39.7px;border-radius:6.5px;background:#78f59a"></div>
  <svg class="ic" style="left:1078px;top:1704px" width="32" height="32" viewBox="1078 1704 32 32">
    <path d="M1083.8 1719.5 L1094 1709 L1104.3 1719.5 M1094 1710 V1731" fill="none" stroke="#1f4448" stroke-width="4" stroke-linecap="round" stroke-linejoin="round"/>
  </svg>
  <div class="lb" style="left:1043.5px;width:100px">Share</div>
  <!-- AI companion -->
  <svg class="ic" style="left:1245px;top:1692px" width="56" height="56" viewBox="1245 1692 56 56">
    <defs><linearGradient id="sp" x1="0" y1="0" x2="1" y2="1"><stop offset="0" stop-color="#f4fbff"/><stop offset="0.45" stop-color="#a9c8ec"/><stop offset="0.6" stop-color="#b9b4e6"/><stop offset="1" stop-color="#e9f8ff"/></linearGradient></defs>
    <path d="M1271.2 1698 C1273.5 1712 1279 1718 1294 1720.7 C1279 1723.5 1273.5 1729.5 1271.2 1744 C1269 1729.5 1263.5 1723.5 1249 1720.7 C1263.5 1718 1269 1712 1271.2 1698 Z" fill="url(#sp)"/>
    <path d="M1289.9 1696.5 C1290.6 1701.5 1292.3 1703 1297 1703.7 C1292.3 1704.5 1290.6 1706 1289.9 1711 C1289.2 1706 1287.5 1704.5 1283 1703.7 C1287.5 1703 1289.2 1701.5 1289.9 1696.5 Z" fill="#dfeeff"/>
  </svg>
  <div class="lb" style="left:1190.5px;width:160px">AI Companion</div>
  <!-- meeting info -->
  <svg class="ic" style="left:1430px;top:1694px" width="52" height="52" viewBox="1430 1694 52 52">
    <circle cx="1456.1" cy="1719.9" r="22.2" fill="none" stroke="#fff" stroke-width="2.4"/>
    <circle cx="1456.3" cy="1708.8" r="2.6" fill="#fff"/>
    <path d="M1452.5 1714.5 H1457.8 V1730.5 M1451.3 1731 H1461.5" fill="none" stroke="#fff" stroke-width="3"/>
  </svg>
  <div class="lb" style="left:1375px;width:160px">Meeting info</div>
  <!-- apps -->
  <svg class="ic" style="left:1598px;top:1694px" width="52" height="52" viewBox="1598 1694 52 52">
    <path d="M1604 1717 V1709 C1604 1703.5 1607.5 1700 1613 1700 H1622" fill="none" stroke="#fff" stroke-width="2.7" stroke-linecap="round"/>
    <path d="M1643.9 1723 V1731 C1643.9 1736.5 1640.5 1740 1635 1740 H1626.5" fill="none" stroke="#fff" stroke-width="2.7" stroke-linecap="round"/>
    <circle cx="1636.1" cy="1707.9" r="7.6" fill="none" stroke="#fff" stroke-width="2.7"/>
    <circle cx="1611.8" cy="1731.7" r="7.6" fill="none" stroke="#fff" stroke-width="2.7"/>
  </svg>
  <div class="lb" style="left:1573.5px;width:100px">Apps</div>
  <!-- notes -->
  <svg class="ic" style="left:1768px;top:1692px" width="52" height="56" viewBox="1768 1692 52 56">
    <path d="M1788 1739.5 H1782 C1778.5 1739.5 1776 1737 1776 1733.5 V1704 C1776 1700.5 1778.5 1698 1782 1698 H1802.5 C1806 1698 1808.5 1700.5 1808.5 1704 V1731.5" fill="none" stroke="#fff" stroke-width="2.7"/>
    <path d="M1772.5 1706 H1778 M1772.5 1711 H1778 M1772.5 1716 H1778 M1772.5 1721 H1778 M1772.5 1726 H1778 M1772.5 1731 H1778" stroke="#fff" stroke-width="1.8" stroke-linecap="round"/>
    <path d="M1788 1706.5 H1800.5 M1788 1713.5 H1800.5 M1788 1721 H1795" stroke="#fff" stroke-width="2.7" stroke-linecap="round"/>
    <path d="M1788.5 1739.5 L1794 1735.5 H1813 C1815 1735.5 1815.8 1736.5 1815.8 1738 V1741.5 C1815.8 1743 1815 1743.5 1813 1743.5 H1794 Z" fill="#fff"/>
  </svg>
  <div class="lb" style="left:1743.5px;width:100px">Notes</div>
  <!-- captions -->
  <svg class="ic" style="left:1957px;top:1699px" width="54" height="42" viewBox="1957 1699 54 42">
    <rect x="1961.4" y="1703.4" width="45" height="33" rx="7" fill="none" stroke="#fff" stroke-width="2.7"/>
    <text x="1984" y="1727.3" text-anchor="middle" font-family="Liberation Sans" font-weight="bold" font-size="19.5" fill="#fff">CC</text>
  </svg>
  <svg class="ic" style="left:2048px;top:1710px" width="20" height="14" viewBox="0 0 20 14"><path d="M2.5 11 L10 3 L17.5 11" fill="none" stroke="#fff" stroke-width="2.6" stroke-linecap="round" stroke-linejoin="round"/></svg>
  <div class="lb" style="left:1903px;width:160px">Show captions</div>
  <!-- breakout -->
  <div class="a" style="left:2167.2px;top:1697.5px;width:21.8px;height:21.3px;border-radius:3px;background:#fff"></div>
  <div class="a" style="left:2191.6px;top:1697.5px;width:21.2px;height:21.3px;border-radius:3px;background:#fff"></div>
  <div class="a" style="left:2167.2px;top:1721.3px;width:21.8px;height:21.3px;border-radius:3px;background:#fff"></div>
  <div class="a" style="left:2191.6px;top:1721.3px;width:21.2px;height:21.3px;border-radius:3px;background:#fff"></div>
  <div class="lb" style="left:2089.5px;width:200px">Breakout rooms</div>
  <!-- docs -->
  <svg class="ic" style="left:2362px;top:1692px" width="48" height="56" viewBox="2362 1692 48 56">
    <rect x="2367.6" y="1697.4" width="36.5" height="45" rx="8" fill="none" stroke="#fff" stroke-width="2.7"/>
    <path d="M2376.5 1710.8 H2385.5 M2376.5 1720.1 H2395.5 M2376.5 1729 H2389.5" stroke="#fff" stroke-width="3" stroke-linecap="round"/>
  </svg>
  <div class="lb" style="left:2335.7px;width:100px">Docs</div>
  <!-- more -->
  <svg class="ic" style="left:2530px;top:1694px" width="52" height="52" viewBox="2530 1694 52 52">
    <circle cx="2556" cy="1719.8" r="22.6" fill="none" stroke="#fff" stroke-width="2.4"/>
    <circle cx="2544" cy="1719.8" r="2.8" fill="#fff"/><circle cx="2556" cy="1719.8" r="2.8" fill="#fff"/><circle cx="2568" cy="1719.8" r="2.8" fill="#fff"/>
  </svg>
  <div class="lb" style="left:2506px;width:100px">More</div>
  <!-- leave -->
  <svg class="ic" style="left:2768px;top:1692px" width="58" height="56" viewBox="2768 1692 58 56">
    <path d="M2790.4 1697.3 H2819 V1733.6 L2805.6 1742 V1706 L2819 1697.3" fill="none" stroke="#e8335b" stroke-width="2.5" stroke-linejoin="round"/>
    <circle cx="2789.8" cy="1707.5" r="5.8" fill="none" stroke="#fff" stroke-width="2.7"/>
    <path d="M2785.5 1714.5 C2780 1716 2776.5 1719 2775.5 1722.5 C2775 1725 2777.5 1726 2779 1724 L2782.5 1720 L2782 1730 L2775.5 1739.5 C2774 1742 2777 1744 2779 1742.5 L2787 1733.5 L2790.5 1741.5 C2791.5 1743.5 2794.5 1742.5 2794 1740 L2792 1729.5 L2791.5 1721 L2795 1725.5 C2796.5 1727.5 2799.5 1726 2798.5 1723.5 C2797 1719.5 2794.5 1716 2791 1714.5 Z" fill="none" stroke="#fff" stroke-width="2.2" stroke-linejoin="round"/>
  </svg>
  <div class="lb" style="left:2745.7px;width:100px">Leave</div>
</div>
</body></html>
